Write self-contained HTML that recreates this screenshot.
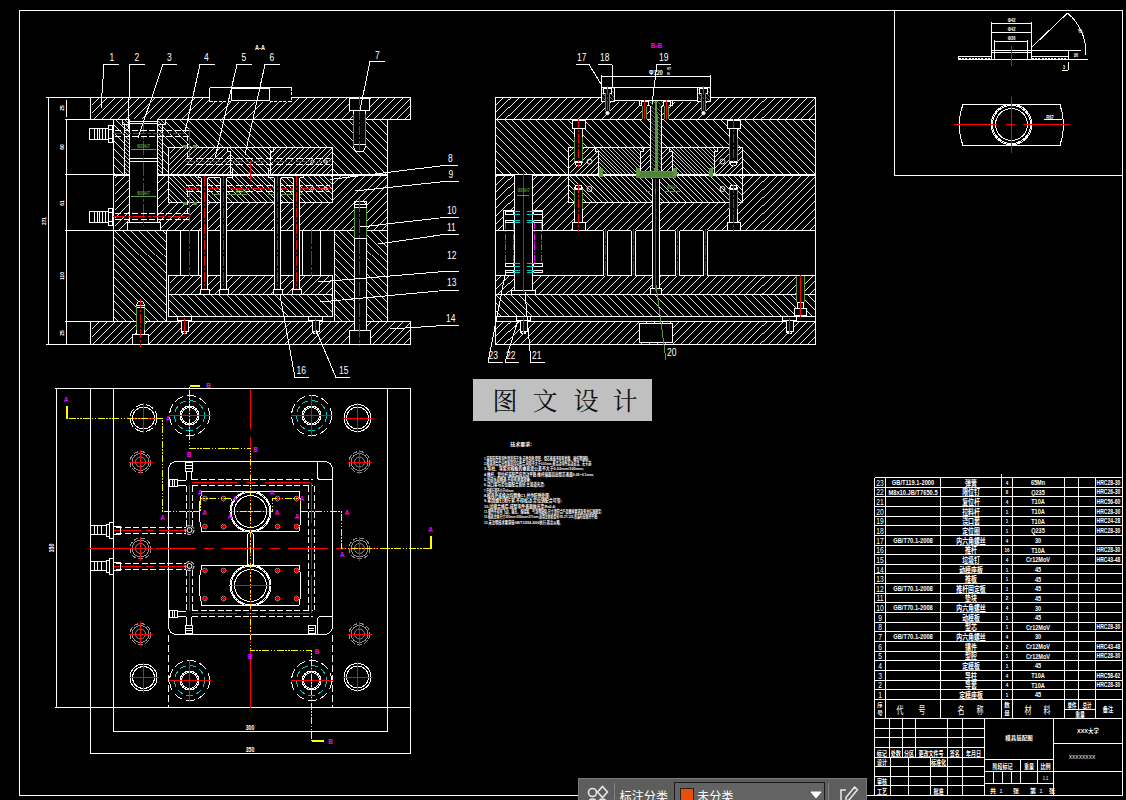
<!DOCTYPE html>
<html lang="zh"><head><meta charset="utf-8"><title>模具装配图</title>
<style>
html,body{margin:0;padding:0;background:#000;overflow:hidden}
svg{display:block}
text{white-space:pre}
</style></head><body>
<svg width="1126" height="800" viewBox="0 0 1126 800" shape-rendering="crispEdges">
<rect width="1126" height="800" fill="#000"/>

<rect x="19.5" y="10.5" width="1103" height="785" fill="none" stroke="#fff" stroke-width="1"/>
<g id="aa">
<rect x="90.5" y="97.5" width="320" height="22" fill="#000" stroke="none"/>
<path d="M90.5,105L98,97.5M90.5,113L106,97.5M92,119.5L114,97.5M100,119.5L122,97.5M108,119.5L130,97.5M116,119.5L138,97.5M124,119.5L146,97.5M132,119.5L154,97.5M140,119.5L162,97.5M148,119.5L170,97.5M156,119.5L178,97.5M164,119.5L186,97.5M172,119.5L194,97.5M180,119.5L202,97.5M188,119.5L210,97.5M196,119.5L218,97.5M204,119.5L226,97.5M212,119.5L234,97.5M220,119.5L242,97.5M228,119.5L250,97.5M236,119.5L258,97.5M244,119.5L266,97.5M252,119.5L274,97.5M260,119.5L282,97.5M268,119.5L290,97.5M276,119.5L298,97.5M284,119.5L306,97.5M292,119.5L314,97.5M300,119.5L322,97.5M308,119.5L330,97.5M316,119.5L338,97.5M324,119.5L346,97.5M332,119.5L354,97.5M340,119.5L362,97.5M348,119.5L370,97.5M356,119.5L378,97.5M364,119.5L386,97.5M372,119.5L394,97.5M380,119.5L402,97.5M388,119.5L410,97.5M396,119.5L410.5,105M404,119.5L410.5,113" stroke="#fff" stroke-width="0.9" fill="none" shape-rendering="crispEdges"/>
<rect x="90.5" y="97.5" width="320" height="22" fill="none" stroke="#fff" stroke-width="1"/>
<rect x="113.5" y="119.5" width="274" height="55" fill="#000" stroke="none"/>
<path d="M113.5,173L115,174.5M113.5,165L123,174.5M113.5,157L131,174.5M113.5,149L139,174.5M113.5,141L147,174.5M113.5,133L155,174.5M113.5,125L163,174.5M116,119.5L171,174.5M124,119.5L179,174.5M132,119.5L187,174.5M140,119.5L195,174.5M148,119.5L203,174.5M156,119.5L211,174.5M164,119.5L219,174.5M172,119.5L227,174.5M180,119.5L235,174.5M188,119.5L243,174.5M196,119.5L251,174.5M204,119.5L259,174.5M212,119.5L267,174.5M220,119.5L275,174.5M228,119.5L283,174.5M236,119.5L291,174.5M244,119.5L299,174.5M252,119.5L307,174.5M260,119.5L315,174.5M268,119.5L323,174.5M276,119.5L331,174.5M284,119.5L339,174.5M292,119.5L347,174.5M300,119.5L355,174.5M308,119.5L363,174.5M316,119.5L371,174.5M324,119.5L379,174.5M332,119.5L387,174.5M340,119.5L387.5,167M348,119.5L387.5,159M356,119.5L387.5,151M364,119.5L387.5,143M372,119.5L387.5,135M380,119.5L387.5,127" stroke="#fff" stroke-width="0.9" fill="none" shape-rendering="crispEdges"/>
<rect x="113.5" y="119.5" width="274" height="55" fill="none" stroke="#fff" stroke-width="1"/>
<rect x="113.5" y="175.5" width="274" height="55" fill="#000" stroke="none"/>
<path d="M113.5,178L116,175.5M113.5,186L124,175.5M113.5,194L132,175.5M113.5,202L140,175.5M113.5,210L148,175.5M113.5,218L156,175.5M113.5,226L164,175.5M117,230.5L172,175.5M125,230.5L180,175.5M133,230.5L188,175.5M141,230.5L196,175.5M149,230.5L204,175.5M157,230.5L212,175.5M165,230.5L220,175.5M173,230.5L228,175.5M181,230.5L236,175.5M189,230.5L244,175.5M197,230.5L252,175.5M205,230.5L260,175.5M213,230.5L268,175.5M221,230.5L276,175.5M229,230.5L284,175.5M237,230.5L292,175.5M245,230.5L300,175.5M253,230.5L308,175.5M261,230.5L316,175.5M269,230.5L324,175.5M277,230.5L332,175.5M285,230.5L340,175.5M293,230.5L348,175.5M301,230.5L356,175.5M309,230.5L364,175.5M317,230.5L372,175.5M325,230.5L380,175.5M333,230.5L387.5,176M341,230.5L387.5,184M349,230.5L387.5,192M357,230.5L387.5,200M365,230.5L387.5,208M373,230.5L387.5,216M381,230.5L387.5,224" stroke="#fff" stroke-width="0.9" fill="none" shape-rendering="crispEdges"/>
<rect x="113.5" y="175.5" width="274" height="55" fill="none" stroke="#fff" stroke-width="1"/>
<rect x="113.5" y="230.5" width="53" height="91" fill="#000" stroke="none"/>
<path d="M113.5,317L118,321.5M113.5,309L126,321.5M113.5,301L134,321.5M113.5,293L142,321.5M113.5,285L150,321.5M113.5,277L158,321.5M113.5,269L166,321.5M113.5,261L166.5,314M113.5,253L166.5,306M113.5,245L166.5,298M113.5,237L166.5,290M115,230.5L166.5,282M123,230.5L166.5,274M131,230.5L166.5,266M139,230.5L166.5,258M147,230.5L166.5,250M155,230.5L166.5,242M163,230.5L166.5,234" stroke="#fff" stroke-width="0.9" fill="none" shape-rendering="crispEdges"/>
<rect x="113.5" y="230.5" width="53" height="91" fill="none" stroke="#fff" stroke-width="1"/>
<rect x="334.5" y="230.5" width="53" height="91" fill="#000" stroke="none"/>
<path d="M334.5,314L342,321.5M334.5,306L350,321.5M334.5,298L358,321.5M334.5,290L366,321.5M334.5,282L374,321.5M334.5,274L382,321.5M334.5,266L387.5,319M334.5,258L387.5,311M334.5,250L387.5,303M334.5,242L387.5,295M334.5,234L387.5,287M339,230.5L387.5,279M347,230.5L387.5,271M355,230.5L387.5,263M363,230.5L387.5,255M371,230.5L387.5,247M379,230.5L387.5,239M387,230.5L387.5,231" stroke="#fff" stroke-width="0.9" fill="none" shape-rendering="crispEdges"/>
<rect x="334.5" y="230.5" width="53" height="91" fill="none" stroke="#fff" stroke-width="1"/>
<rect x="90.5" y="321.5" width="320" height="23" fill="#000" stroke="none"/>
<path d="M90.5,329L98,321.5M90.5,337L106,321.5M91,344.5L114,321.5M99,344.5L122,321.5M107,344.5L130,321.5M115,344.5L138,321.5M123,344.5L146,321.5M131,344.5L154,321.5M139,344.5L162,321.5M147,344.5L170,321.5M155,344.5L178,321.5M163,344.5L186,321.5M171,344.5L194,321.5M179,344.5L202,321.5M187,344.5L210,321.5M195,344.5L218,321.5M203,344.5L226,321.5M211,344.5L234,321.5M219,344.5L242,321.5M227,344.5L250,321.5M235,344.5L258,321.5M243,344.5L266,321.5M251,344.5L274,321.5M259,344.5L282,321.5M267,344.5L290,321.5M275,344.5L298,321.5M283,344.5L306,321.5M291,344.5L314,321.5M299,344.5L322,321.5M307,344.5L330,321.5M315,344.5L338,321.5M323,344.5L346,321.5M331,344.5L354,321.5M339,344.5L362,321.5M347,344.5L370,321.5M355,344.5L378,321.5M363,344.5L386,321.5M371,344.5L394,321.5M379,344.5L402,321.5M387,344.5L410,321.5M395,344.5L410.5,329M403,344.5L410.5,337" stroke="#fff" stroke-width="0.9" fill="none" shape-rendering="crispEdges"/>
<rect x="90.5" y="321.5" width="320" height="23" fill="none" stroke="#fff" stroke-width="1"/>
<rect x="168.5" y="275.5" width="164" height="19" fill="#000" stroke="none"/>
<path d="M168.5,283L176,275.5M168.5,291L184,275.5M173,294.5L192,275.5M181,294.5L200,275.5M189,294.5L208,275.5M197,294.5L216,275.5M205,294.5L224,275.5M213,294.5L232,275.5M221,294.5L240,275.5M229,294.5L248,275.5M237,294.5L256,275.5M245,294.5L264,275.5M253,294.5L272,275.5M261,294.5L280,275.5M269,294.5L288,275.5M277,294.5L296,275.5M285,294.5L304,275.5M293,294.5L312,275.5M301,294.5L320,275.5M309,294.5L328,275.5M317,294.5L332.5,279M325,294.5L332.5,287" stroke="#fff" stroke-width="0.9" fill="none" shape-rendering="crispEdges"/>
<rect x="168.5" y="275.5" width="164" height="19" fill="none" stroke="#fff" stroke-width="1"/>
<rect x="168.5" y="294.5" width="164" height="22" fill="#000" stroke="none"/>
<path d="M168.5,316L169,316.5M168.5,308L177,316.5M168.5,300L185,316.5M171,294.5L193,316.5M179,294.5L201,316.5M187,294.5L209,316.5M195,294.5L217,316.5M203,294.5L225,316.5M211,294.5L233,316.5M219,294.5L241,316.5M227,294.5L249,316.5M235,294.5L257,316.5M243,294.5L265,316.5M251,294.5L273,316.5M259,294.5L281,316.5M267,294.5L289,316.5M275,294.5L297,316.5M283,294.5L305,316.5M291,294.5L313,316.5M299,294.5L321,316.5M307,294.5L329,316.5M315,294.5L332.5,312M323,294.5L332.5,304M331,294.5L332.5,296" stroke="#fff" stroke-width="0.9" fill="none" shape-rendering="crispEdges"/>
<rect x="168.5" y="294.5" width="164" height="22" fill="none" stroke="#fff" stroke-width="1"/>
<rect x="168.5" y="147.5" width="164" height="55" fill="#000" stroke="#fff" stroke-width="1"/>
<rect x="168.5" y="147.5" width="164" height="27" fill="#000" stroke="none"/>
<path d="M168.5,153.4L174.4,147.5M168.5,159L180,147.5M168.5,164.6L185.6,147.5M168.5,170.2L191.2,147.5M169.8,174.5L196.8,147.5M175.4,174.5L202.4,147.5M181,174.5L208,147.5M186.6,174.5L213.6,147.5M192.2,174.5L219.2,147.5M197.8,174.5L224.8,147.5M203.4,174.5L230.4,147.5M209,174.5L236,147.5M214.6,174.5L241.6,147.5M220.2,174.5L247.2,147.5M225.8,174.5L252.8,147.5M231.4,174.5L258.4,147.5M237,174.5L264,147.5M242.6,174.5L269.6,147.5M248.2,174.5L275.2,147.5M253.8,174.5L280.8,147.5M259.4,174.5L286.4,147.5M265,174.5L292,147.5M270.6,174.5L297.6,147.5M276.2,174.5L303.2,147.5M281.8,174.5L308.8,147.5M287.4,174.5L314.4,147.5M293,174.5L320,147.5M298.6,174.5L325.6,147.5M304.2,174.5L331.2,147.5M309.8,174.5L332.5,151.8M315.4,174.5L332.5,157.4M321,174.5L332.5,163M326.6,174.5L332.5,168.6M332.2,174.5L332.5,174.2" stroke="#fff" stroke-width="0.9" fill="none" shape-rendering="crispEdges"/>
<rect x="168.5" y="147.5" width="164" height="27" fill="none" stroke="#fff" stroke-width="1"/>
<rect x="168.5" y="175.5" width="164" height="27" fill="#000" stroke="none"/>
<path d="M168.5,198.7L172.3,202.5M168.5,193.1L177.9,202.5M168.5,187.5L183.5,202.5M168.5,181.9L189.1,202.5M168.5,176.3L194.7,202.5M173.3,175.5L200.3,202.5M178.9,175.5L205.9,202.5M184.5,175.5L211.5,202.5M190.1,175.5L217.1,202.5M195.7,175.5L222.7,202.5M201.3,175.5L228.3,202.5M206.9,175.5L233.9,202.5M212.5,175.5L239.5,202.5M218.1,175.5L245.1,202.5M223.7,175.5L250.7,202.5M229.3,175.5L256.3,202.5M234.9,175.5L261.9,202.5M240.5,175.5L267.5,202.5M246.1,175.5L273.1,202.5M251.7,175.5L278.7,202.5M257.3,175.5L284.3,202.5M262.9,175.5L289.9,202.5M268.5,175.5L295.5,202.5M274.1,175.5L301.1,202.5M279.7,175.5L306.7,202.5M285.3,175.5L312.3,202.5M290.9,175.5L317.9,202.5M296.5,175.5L323.5,202.5M302.1,175.5L329.1,202.5M307.7,175.5L332.5,200.3M313.3,175.5L332.5,194.7M318.9,175.5L332.5,189.1M324.5,175.5L332.5,183.5M330.1,175.5L332.5,177.9" stroke="#fff" stroke-width="0.9" fill="none" shape-rendering="crispEdges"/>
<rect x="168.5" y="175.5" width="164" height="27" fill="none" stroke="#fff" stroke-width="1"/>
<rect x="230.5" y="151.5" width="40" height="23" fill="#000" stroke="#fff" stroke-width="1"/>
<clipPath id="cp1"><polygon points="227.5,147.5 273.5,147.5 273.5,151.5 270.5,151.5 270.5,174.5 230.5,174.5 230.5,151.5 227.5,151.5"/></clipPath>
<polygon points="227.5,147.5 273.5,147.5 273.5,151.5 270.5,151.5 270.5,174.5 230.5,174.5 230.5,151.5 227.5,151.5" fill="#000" stroke="none"/>
<path d="M227.5,173.7L228.3,174.5M227.5,168.1L233.9,174.5M227.5,162.5L239.5,174.5M227.5,156.9L245.1,174.5M227.5,151.3L250.7,174.5M229.3,147.5L256.3,174.5M234.9,147.5L261.9,174.5M240.5,147.5L267.5,174.5M246.1,147.5L273.1,174.5M251.7,147.5L273.5,169.3M257.3,147.5L273.5,163.7M262.9,147.5L273.5,158.1M268.5,147.5L273.5,152.5" stroke="#fff" stroke-width="0.9" fill="none" shape-rendering="crispEdges" clip-path="url(#cp1)"/>
<polygon points="227.5,147.5 273.5,147.5 273.5,151.5 270.5,151.5 270.5,174.5 230.5,174.5 230.5,151.5 227.5,151.5" fill="none" stroke="#fff" stroke-width="1"/>
<line x1="232.5" y1="168" x2="232.5" y2="175" stroke="#fff" stroke-width="1"/>
<line x1="268.5" y1="168" x2="268.5" y2="175" stroke="#fff" stroke-width="1"/>
<rect x="198.5" y="175.5" width="34" height="2" fill="#000" stroke="#fff" stroke-width="1"/>
<rect x="268.5" y="175.5" width="35" height="2" fill="#000" stroke="#fff" stroke-width="1"/>
<rect x="209.5" y="87.5" width="82" height="14" fill="#000" stroke="#000" stroke-width="1"/>
<line x1="209.5" y1="87.5" x2="291.5" y2="87.5" stroke="#fff" stroke-width="1"/>
<line x1="209.5" y1="87.5" x2="209.5" y2="101.5" stroke="#fff" stroke-width="1"/>
<line x1="291.5" y1="87.5" x2="291.5" y2="101.5" stroke="#fff" stroke-width="1" stroke-dasharray="3 1.5"/>
<line x1="209.5" y1="101.5" x2="231.5" y2="101.5" stroke="#fff" stroke-width="1" stroke-dasharray="3 1.5"/>
<line x1="269.5" y1="101.5" x2="291.5" y2="101.5" stroke="#fff" stroke-width="1" stroke-dasharray="3 1.5"/>
<line x1="231.5" y1="87.5" x2="231.5" y2="100.5" stroke="#fff" stroke-width="1"/>
<line x1="269.5" y1="87.5" x2="269.5" y2="100.5" stroke="#fff" stroke-width="1"/>
<line x1="231.5" y1="100.5" x2="269.5" y2="100.5" stroke="#fff" stroke-width="1"/>
<line x1="231.5" y1="88.5" x2="269.5" y2="88.5" stroke="#fff" stroke-width="1"/>
<rect x="122.5" y="119.5" width="43" height="5" fill="#000" stroke="#000" stroke-width="1"/>
<rect x="122.5" y="119.5" width="7" height="5" fill="#000" stroke="none"/>
<path d="M122.5,121.2L125.8,124.5M124.8,119.5L129.5,124.2M128.8,119.5L129.5,120.2" stroke="#fff" stroke-width="0.8" fill="none" shape-rendering="crispEdges"/>
<rect x="122.5" y="119.5" width="7" height="5" fill="none" stroke="#fff" stroke-width="1"/>
<rect x="157.5" y="119.5" width="8" height="5" fill="#000" stroke="none"/>
<path d="M157.5,124.2L157.8,124.5M157.5,120.2L161.8,124.5M160.8,119.5L165.5,124.2M164.8,119.5L165.5,120.2" stroke="#fff" stroke-width="0.8" fill="none" shape-rendering="crispEdges"/>
<rect x="157.5" y="119.5" width="8" height="5" fill="none" stroke="#fff" stroke-width="1"/>
<rect x="124.5" y="124.5" width="38" height="50" fill="#000" stroke="#000" stroke-width="1"/>
<rect x="124.5" y="124.5" width="5" height="50" fill="#000" stroke="none"/>
<path d="M124.5,171.2L127.8,174.5M124.5,167.2L129.5,172.2M124.5,163.2L129.5,168.2M124.5,159.2L129.5,164.2M124.5,155.2L129.5,160.2M124.5,151.2L129.5,156.2M124.5,147.2L129.5,152.2M124.5,143.2L129.5,148.2M124.5,139.2L129.5,144.2M124.5,135.2L129.5,140.2M124.5,131.2L129.5,136.2M124.5,127.2L129.5,132.2M125.8,124.5L129.5,128.2" stroke="#fff" stroke-width="0.8" fill="none" shape-rendering="crispEdges"/>
<rect x="124.5" y="124.5" width="5" height="50" fill="none" stroke="#fff" stroke-width="1"/>
<rect x="157.5" y="124.5" width="5" height="50" fill="#000" stroke="none"/>
<path d="M157.5,172.2L159.8,174.5M157.5,168.2L162.5,173.2M157.5,164.2L162.5,169.2M157.5,160.2L162.5,165.2M157.5,156.2L162.5,161.2M157.5,152.2L162.5,157.2M157.5,148.2L162.5,153.2M157.5,144.2L162.5,149.2M157.5,140.2L162.5,145.2M157.5,136.2L162.5,141.2M157.5,132.2L162.5,137.2M157.5,128.2L162.5,133.2M157.8,124.5L162.5,129.2M161.8,124.5L162.5,125.2" stroke="#fff" stroke-width="0.8" fill="none" shape-rendering="crispEdges"/>
<rect x="157.5" y="124.5" width="5" height="50" fill="none" stroke="#fff" stroke-width="1"/>
<rect x="129.5" y="121.5" width="28" height="102" fill="#000" stroke="#fff" stroke-width="1"/>
<line x1="129.5" y1="123.5" x2="157.5" y2="123.5" stroke="#fff" stroke-width="1"/>
<line x1="129.5" y1="158.5" x2="157.5" y2="158.5" stroke="#fff" stroke-width="1"/>
<line x1="129.5" y1="161.5" x2="157.5" y2="161.5" stroke="#fff" stroke-width="1"/>
<rect x="127.5" y="222.5" width="33" height="8" fill="#000" stroke="#fff" stroke-width="1"/>
<line x1="143.5" y1="120" x2="143.5" y2="226" stroke="#ff0000" stroke-width="1" stroke-dasharray="14 2 3 2"/>
<line x1="131" y1="149.5" x2="156" y2="149.5" stroke="#5a9a3c" stroke-width="1"/>
<text transform="translate(143.5 148) scale(0.8 1)" font-size="5" fill="#5a9a3c" text-anchor="middle" font-family="&quot;Liberation Sans&quot;, &quot;Noto Sans CJK SC&quot;, sans-serif" font-weight="bold">Φ20H7</text>
<line x1="131" y1="196.5" x2="156" y2="196.5" stroke="#5a9a3c" stroke-width="1"/>
<text transform="translate(143.5 195) scale(0.8 1)" font-size="5" fill="#5a9a3c" text-anchor="middle" font-family="&quot;Liberation Sans&quot;, &quot;Noto Sans CJK SC&quot;, sans-serif" font-weight="bold">Φ20H7</text>
<line x1="115" y1="130.5" x2="190" y2="130.5" stroke="#fff" stroke-width="1" stroke-dasharray="6 2.5"/>
<line x1="115" y1="136.5" x2="190" y2="136.5" stroke="#fff" stroke-width="1" stroke-dasharray="6 2.5"/>
<line x1="113" y1="133.5" x2="190" y2="133.5" stroke="#ff0000" stroke-width="1" stroke-dasharray="12 2.5 3 2.5"/>
<line x1="189.5" y1="128" x2="189.5" y2="162" stroke="#ff0000" stroke-width="1"/>
<line x1="187.5" y1="136" x2="187.5" y2="158" stroke="#fff" stroke-width="1" stroke-dasharray="5 3"/>
<line x1="115" y1="213.5" x2="190" y2="213.5" stroke="#fff" stroke-width="1" stroke-dasharray="6 2.5"/>
<line x1="115" y1="219.5" x2="190" y2="219.5" stroke="#fff" stroke-width="1" stroke-dasharray="6 2.5"/>
<line x1="113" y1="216.5" x2="190" y2="216.5" stroke="#ff0000" stroke-width="1" stroke-dasharray="12 2.5 3 2.5"/>
<line x1="189.5" y1="188" x2="189.5" y2="222" stroke="#ff0000" stroke-width="1"/>
<line x1="187.5" y1="192" x2="187.5" y2="214" stroke="#fff" stroke-width="1" stroke-dasharray="5 3"/>
<line x1="186" y1="158.5" x2="330" y2="158.5" stroke="#fff" stroke-width="1" stroke-dasharray="7 3"/>
<line x1="186" y1="164.5" x2="330" y2="164.5" stroke="#fff" stroke-width="1" stroke-dasharray="7 3"/>
<line x1="185" y1="161.5" x2="332" y2="161.5" stroke="#ff0000" stroke-width="1" stroke-dasharray="14 2.5 3 2.5"/>
<circle cx="312.5" cy="161.5" r="1.6" fill="none" stroke="#fff" stroke-width="1" shape-rendering="geometricPrecision"/>
<circle cx="325.5" cy="161.5" r="1.6" fill="none" stroke="#fff" stroke-width="1" shape-rendering="geometricPrecision"/>
<line x1="186" y1="185.5" x2="330" y2="185.5" stroke="#fff" stroke-width="1" stroke-dasharray="7 3"/>
<line x1="186" y1="191.5" x2="330" y2="191.5" stroke="#fff" stroke-width="1" stroke-dasharray="7 3"/>
<line x1="185" y1="188.5" x2="332" y2="188.5" stroke="#ff0000" stroke-width="1" stroke-dasharray="14 2.5 3 2.5"/>
<circle cx="312.5" cy="188.5" r="1.6" fill="none" stroke="#fff" stroke-width="1" shape-rendering="geometricPrecision"/>
<circle cx="325.5" cy="188.5" r="1.6" fill="none" stroke="#fff" stroke-width="1" shape-rendering="geometricPrecision"/>
<line x1="250.5" y1="161" x2="250.5" y2="181" stroke="#ff0000" stroke-width="1"/>
<rect x="183.5" y="145.5" width="3" height="2" fill="#5a9a3c" stroke="#5a9a3c" stroke-width="1"/>
<rect x="193.5" y="145.5" width="3" height="2" fill="#5a9a3c" stroke="#5a9a3c" stroke-width="1"/>
<rect x="183.5" y="202.5" width="3" height="2" fill="#5a9a3c" stroke="#5a9a3c" stroke-width="1"/>
<rect x="193.5" y="202.5" width="3" height="2" fill="#5a9a3c" stroke="#5a9a3c" stroke-width="1"/>
<line x1="189.5" y1="149" x2="189.5" y2="156" stroke="#5a9a3c" stroke-width="1" stroke-dasharray="3 3"/>
<line x1="189.5" y1="194" x2="189.5" y2="201" stroke="#5a9a3c" stroke-width="1" stroke-dasharray="3 3"/>
<text transform="translate(241 193) scale(0.8 1)" font-size="5" fill="#5a9a3c" text-anchor="middle" font-family="&quot;Liberation Sans&quot;, &quot;Noto Sans CJK SC&quot;, sans-serif" font-weight="bold">Φ5H7</text>
<text transform="translate(296 193) scale(0.8 1)" font-size="5" fill="#5a9a3c" text-anchor="middle" font-family="&quot;Liberation Sans&quot;, &quot;Noto Sans CJK SC&quot;, sans-serif" font-weight="bold">Φ5H7</text>
<line x1="212" y1="194.5" x2="247" y2="194.5" stroke="#5a9a3c" stroke-width="1"/>
<line x1="268" y1="194.5" x2="302" y2="194.5" stroke="#5a9a3c" stroke-width="1"/>
<rect x="89.5" y="128.5" width="19" height="11" fill="#000" stroke="#fff" stroke-width="1"/>
<line x1="94.5" y1="128.5" x2="94.5" y2="139.5" stroke="#fff" stroke-width="1"/>
<line x1="97.5" y1="128.5" x2="97.5" y2="139.5" stroke="#fff" stroke-width="1"/>
<line x1="99.5" y1="128.5" x2="99.5" y2="139.5" stroke="#fff" stroke-width="1"/>
<line x1="102.5" y1="128.5" x2="102.5" y2="139.5" stroke="#fff" stroke-width="1"/>
<line x1="105.5" y1="128.5" x2="105.5" y2="139.5" stroke="#fff" stroke-width="1"/>
<rect x="108.5" y="125.5" width="4" height="17" fill="#000" stroke="#fff" stroke-width="1"/>
<line x1="108.5" y1="129.5" x2="112.5" y2="129.5" stroke="#fff" stroke-width="1"/>
<line x1="108.5" y1="138.5" x2="112.5" y2="138.5" stroke="#fff" stroke-width="1"/>
<rect x="89.5" y="211.5" width="19" height="11" fill="#000" stroke="#fff" stroke-width="1"/>
<line x1="94.5" y1="211.5" x2="94.5" y2="222.5" stroke="#fff" stroke-width="1"/>
<line x1="97.5" y1="211.5" x2="97.5" y2="222.5" stroke="#fff" stroke-width="1"/>
<line x1="99.5" y1="211.5" x2="99.5" y2="222.5" stroke="#fff" stroke-width="1"/>
<line x1="102.5" y1="211.5" x2="102.5" y2="222.5" stroke="#fff" stroke-width="1"/>
<line x1="105.5" y1="211.5" x2="105.5" y2="222.5" stroke="#fff" stroke-width="1"/>
<rect x="108.5" y="208.5" width="4" height="17" fill="#000" stroke="#fff" stroke-width="1"/>
<line x1="108.5" y1="212.5" x2="112.5" y2="212.5" stroke="#fff" stroke-width="1"/>
<line x1="108.5" y1="221.5" x2="112.5" y2="221.5" stroke="#fff" stroke-width="1"/>
<rect x="180.5" y="230.5" width="18" height="45" fill="#000" stroke="#fff" stroke-width="1"/>
<line x1="189.5" y1="230" x2="189.5" y2="276" stroke="#ff0000" stroke-width="1" stroke-dasharray="14 2 3 2"/>
<rect x="302.5" y="230.5" width="18" height="45" fill="#000" stroke="#fff" stroke-width="1"/>
<line x1="311.5" y1="230" x2="311.5" y2="276" stroke="#ff0000" stroke-width="1" stroke-dasharray="14 2 3 2"/>
<rect x="201.5" y="177.5" width="6" height="117" fill="#000" stroke="#000" stroke-width="1"/>
<line x1="201.5" y1="177.5" x2="201.5" y2="294.5" stroke="#fff" stroke-width="1"/>
<line x1="207.5" y1="177.5" x2="207.5" y2="294.5" stroke="#fff" stroke-width="1"/>
<line x1="204.5" y1="175.5" x2="204.5" y2="295.5" stroke="#ff0000" stroke-width="1" stroke-dasharray="10 2 2 2"/>
<rect x="200.5" y="289.5" width="9" height="5" fill="#000" stroke="#fff" stroke-width="1"/>
<rect x="220.5" y="177.5" width="6" height="117" fill="#000" stroke="#000" stroke-width="1"/>
<line x1="220.5" y1="177.5" x2="220.5" y2="294.5" stroke="#fff" stroke-width="1"/>
<line x1="226.5" y1="177.5" x2="226.5" y2="294.5" stroke="#fff" stroke-width="1"/>
<line x1="223.5" y1="175.5" x2="223.5" y2="295.5" stroke="#ff0000" stroke-width="1" stroke-dasharray="10 2 2 2"/>
<rect x="219.5" y="289.5" width="9" height="5" fill="#000" stroke="#fff" stroke-width="1"/>
<rect x="274.5" y="177.5" width="6" height="117" fill="#000" stroke="#000" stroke-width="1"/>
<line x1="274.5" y1="177.5" x2="274.5" y2="294.5" stroke="#fff" stroke-width="1"/>
<line x1="280.5" y1="177.5" x2="280.5" y2="294.5" stroke="#fff" stroke-width="1"/>
<line x1="277.5" y1="175.5" x2="277.5" y2="295.5" stroke="#ff0000" stroke-width="1" stroke-dasharray="10 2 2 2"/>
<rect x="273.5" y="289.5" width="9" height="5" fill="#000" stroke="#fff" stroke-width="1"/>
<rect x="293.5" y="177.5" width="6" height="117" fill="#000" stroke="#000" stroke-width="1"/>
<line x1="293.5" y1="177.5" x2="293.5" y2="294.5" stroke="#fff" stroke-width="1"/>
<line x1="299.5" y1="177.5" x2="299.5" y2="294.5" stroke="#fff" stroke-width="1"/>
<line x1="296.5" y1="175.5" x2="296.5" y2="295.5" stroke="#ff0000" stroke-width="1" stroke-dasharray="10 2 2 2"/>
<rect x="292.5" y="289.5" width="9" height="5" fill="#000" stroke="#fff" stroke-width="1"/>
<rect x="177.5" y="316.5" width="14" height="4" fill="#000" stroke="#fff" stroke-width="1"/>
<rect x="181.5" y="320.5" width="7" height="11" fill="#000" stroke="#fff" stroke-width="1"/>
<path d="M181,331 L182.5,333 L186.5,333 L188,331" fill="none" stroke="#fff" stroke-width="1"/>
<line x1="184.5" y1="318" x2="184.5" y2="334" stroke="#ff0000" stroke-width="1"/>
<rect x="308.5" y="316.5" width="14" height="4" fill="#000" stroke="#fff" stroke-width="1"/>
<rect x="312.5" y="320.5" width="7" height="11" fill="#000" stroke="#fff" stroke-width="1"/>
<path d="M312,331 L313.5,333 L317.5,333 L319,331" fill="none" stroke="#fff" stroke-width="1"/>
<line x1="315.5" y1="318" x2="315.5" y2="334" stroke="#ff0000" stroke-width="1"/>
<rect x="349.5" y="98.5" width="20" height="12" fill="#000" stroke="#fff" stroke-width="1"/>
<rect x="353.5" y="110.5" width="12" height="37" fill="#000" stroke="#fff" stroke-width="1"/>
<line x1="353.5" y1="114" x2="353.5" y2="146" stroke="#5a9a3c" stroke-width="1"/>
<line x1="365.5" y1="114" x2="365.5" y2="146" stroke="#5a9a3c" stroke-width="1"/>
<polyline points="353.5,147 355.5,151 363.5,151 365.5,147" fill="#000" stroke="#fff" stroke-width="1"/>
<line x1="353.5" y1="144.5" x2="365.5" y2="144.5" stroke="#fff" stroke-width="1"/>
<line x1="359.5" y1="96" x2="359.5" y2="153" stroke="#ff0000" stroke-width="1" stroke-dasharray="9 2 2 2"/>
<rect x="349.5" y="330.5" width="21" height="14" fill="#000" stroke="#fff" stroke-width="1"/>
<rect x="354.5" y="201.5" width="12" height="129" fill="#000" stroke="#fff" stroke-width="1"/>
<path d="M354,205 L356,201 L364,201 L366,205" fill="#000" stroke="#fff" stroke-width="1"/>
<line x1="354" y1="204.5" x2="366" y2="204.5" stroke="#fff" stroke-width="1"/>
<line x1="354" y1="207.5" x2="366" y2="207.5" stroke="#fff" stroke-width="1"/>
<line x1="354.5" y1="208" x2="354.5" y2="238" stroke="#5a9a3c" stroke-width="1"/>
<line x1="366.5" y1="208" x2="366.5" y2="238" stroke="#5a9a3c" stroke-width="1"/>
<line x1="354" y1="238.5" x2="366" y2="238.5" stroke="#fff" stroke-width="1"/>
<line x1="359.5" y1="198" x2="359.5" y2="346" stroke="#ff0000" stroke-width="1" stroke-dasharray="14 2 3 2"/>
<rect x="132.5" y="334.5" width="16" height="10" fill="#000" stroke="#fff" stroke-width="1"/>
<rect x="136.5" y="305.5" width="8" height="29" fill="#000" stroke="#fff" stroke-width="1"/>
<line x1="136.5" y1="306" x2="136.5" y2="330" stroke="#5a9a3c" stroke-width="1"/>
<line x1="144.5" y1="306" x2="144.5" y2="330" stroke="#5a9a3c" stroke-width="1"/>
<polyline points="136.5,305 138.5,301 142.5,301 144.5,305" fill="#000" stroke="#fff" stroke-width="1"/>
<line x1="136.5" y1="307.5" x2="144.5" y2="307.5" stroke="#fff" stroke-width="1"/>
<line x1="140.5" y1="299" x2="140.5" y2="346.5" stroke="#ff0000" stroke-width="1" stroke-dasharray="9 2 2 2"/>
<line x1="46" y1="97.5" x2="90.5" y2="97.5" stroke="#fff" stroke-width="1"/>
<line x1="46" y1="344.5" x2="90.5" y2="344.5" stroke="#fff" stroke-width="1"/>
<line x1="48.5" y1="97.5" x2="48.5" y2="344.5" stroke="#fff" stroke-width="1"/>
<line x1="66.5" y1="100" x2="66.5" y2="117" stroke="#fff" stroke-width="1"/>
<line x1="66.5" y1="119.5" x2="66.5" y2="344.5" stroke="#fff" stroke-width="1"/>
<line x1="65" y1="119.5" x2="113.5" y2="119.5" stroke="#fff" stroke-width="1"/>
<line x1="65" y1="174.5" x2="113.5" y2="174.5" stroke="#fff" stroke-width="1"/>
<line x1="65" y1="230.5" x2="113.5" y2="230.5" stroke="#fff" stroke-width="1"/>
<line x1="65" y1="321.5" x2="90.5" y2="321.5" stroke="#fff" stroke-width="1"/>
<text transform="translate(64 108) rotate(-90) scale(0.8 1)" font-size="6" fill="#fff" text-anchor="middle" font-family="&quot;Liberation Sans&quot;, &quot;Noto Sans CJK SC&quot;, sans-serif" font-weight="bold">25</text>
<text transform="translate(64 147) rotate(-90) scale(0.8 1)" font-size="6" fill="#fff" text-anchor="middle" font-family="&quot;Liberation Sans&quot;, &quot;Noto Sans CJK SC&quot;, sans-serif" font-weight="bold">60</text>
<text transform="translate(64 203) rotate(-90) scale(0.8 1)" font-size="6" fill="#fff" text-anchor="middle" font-family="&quot;Liberation Sans&quot;, &quot;Noto Sans CJK SC&quot;, sans-serif" font-weight="bold">61</text>
<text transform="translate(64 276) rotate(-90) scale(0.8 1)" font-size="6" fill="#fff" text-anchor="middle" font-family="&quot;Liberation Sans&quot;, &quot;Noto Sans CJK SC&quot;, sans-serif" font-weight="bold">110</text>
<text transform="translate(64 333) rotate(-90) scale(0.8 1)" font-size="6" fill="#fff" text-anchor="middle" font-family="&quot;Liberation Sans&quot;, &quot;Noto Sans CJK SC&quot;, sans-serif" font-weight="bold">25</text>
<text transform="translate(46 221) rotate(-90) scale(0.8 1)" font-size="6" fill="#fff" text-anchor="middle" font-family="&quot;Liberation Sans&quot;, &quot;Noto Sans CJK SC&quot;, sans-serif" font-weight="bold">271</text>
<text transform="translate(109.5 61) scale(0.76 1)" font-size="11.2" fill="#fff" text-anchor="start" font-family="&quot;Liberation Sans&quot;, &quot;Noto Sans CJK SC&quot;, sans-serif">1</text>
<line x1="104" y1="64.5" x2="119" y2="64.5" stroke="#fff" stroke-width="1"/>
<line x1="104" y1="64.5" x2="101" y2="108" stroke="#fff" stroke-width="1"/>
<text transform="translate(134.5 61) scale(0.76 1)" font-size="11.2" fill="#fff" text-anchor="start" font-family="&quot;Liberation Sans&quot;, &quot;Noto Sans CJK SC&quot;, sans-serif">2</text>
<line x1="130" y1="64.5" x2="145" y2="64.5" stroke="#fff" stroke-width="1"/>
<line x1="130" y1="64.5" x2="128" y2="130" stroke="#fff" stroke-width="1"/>
<text transform="translate(167 61) scale(0.76 1)" font-size="11.2" fill="#fff" text-anchor="start" font-family="&quot;Liberation Sans&quot;, &quot;Noto Sans CJK SC&quot;, sans-serif">3</text>
<line x1="163" y1="64.5" x2="177" y2="64.5" stroke="#fff" stroke-width="1"/>
<line x1="163" y1="64.5" x2="138" y2="138" stroke="#fff" stroke-width="1"/>
<text transform="translate(204 61) scale(0.76 1)" font-size="11.2" fill="#fff" text-anchor="start" font-family="&quot;Liberation Sans&quot;, &quot;Noto Sans CJK SC&quot;, sans-serif">4</text>
<line x1="200" y1="64.5" x2="215" y2="64.5" stroke="#fff" stroke-width="1"/>
<line x1="200" y1="64.5" x2="185" y2="132" stroke="#fff" stroke-width="1"/>
<text transform="translate(241.5 61) scale(0.76 1)" font-size="11.2" fill="#fff" text-anchor="start" font-family="&quot;Liberation Sans&quot;, &quot;Noto Sans CJK SC&quot;, sans-serif">5</text>
<line x1="237" y1="64.5" x2="252" y2="64.5" stroke="#fff" stroke-width="1"/>
<line x1="237" y1="64.5" x2="215" y2="158" stroke="#fff" stroke-width="1"/>
<text transform="translate(269.5 61) scale(0.76 1)" font-size="11.2" fill="#fff" text-anchor="start" font-family="&quot;Liberation Sans&quot;, &quot;Noto Sans CJK SC&quot;, sans-serif">6</text>
<line x1="265" y1="64.5" x2="280" y2="64.5" stroke="#fff" stroke-width="1"/>
<line x1="265" y1="64.5" x2="245" y2="155" stroke="#fff" stroke-width="1"/>
<text transform="translate(375 58.5) scale(0.76 1)" font-size="11.2" fill="#fff" text-anchor="start" font-family="&quot;Liberation Sans&quot;, &quot;Noto Sans CJK SC&quot;, sans-serif">7</text>
<line x1="370" y1="61.5" x2="385" y2="61.5" stroke="#fff" stroke-width="1"/>
<line x1="370" y1="61.5" x2="360" y2="110" stroke="#fff" stroke-width="1"/>
<text transform="translate(448 162) scale(0.76 1)" font-size="11.2" fill="#fff" text-anchor="start" font-family="&quot;Liberation Sans&quot;, &quot;Noto Sans CJK SC&quot;, sans-serif">8</text>
<line x1="444" y1="165.5" x2="458" y2="165.5" stroke="#fff" stroke-width="1"/>
<line x1="444" y1="165.5" x2="330" y2="179.5" stroke="#fff" stroke-width="1"/>
<text transform="translate(448.5 178) scale(0.76 1)" font-size="11.2" fill="#fff" text-anchor="start" font-family="&quot;Liberation Sans&quot;, &quot;Noto Sans CJK SC&quot;, sans-serif">9</text>
<line x1="445" y1="181.5" x2="459" y2="181.5" stroke="#fff" stroke-width="1"/>
<line x1="445" y1="181.5" x2="355" y2="191" stroke="#fff" stroke-width="1"/>
<text transform="translate(447 214) scale(0.76 1)" font-size="11.2" fill="#fff" text-anchor="start" font-family="&quot;Liberation Sans&quot;, &quot;Noto Sans CJK SC&quot;, sans-serif">10</text>
<line x1="444" y1="217.5" x2="459" y2="217.5" stroke="#fff" stroke-width="1"/>
<line x1="444" y1="217.5" x2="360" y2="227" stroke="#fff" stroke-width="1"/>
<text transform="translate(447 231) scale(0.76 1)" font-size="11.2" fill="#fff" text-anchor="start" font-family="&quot;Liberation Sans&quot;, &quot;Noto Sans CJK SC&quot;, sans-serif">11</text>
<line x1="444" y1="234.5" x2="459" y2="234.5" stroke="#fff" stroke-width="1"/>
<line x1="444" y1="234.5" x2="378" y2="244" stroke="#fff" stroke-width="1"/>
<text transform="translate(447 259) scale(0.76 1)" font-size="11.2" fill="#fff" text-anchor="start" font-family="&quot;Liberation Sans&quot;, &quot;Noto Sans CJK SC&quot;, sans-serif">12</text>
<line x1="444" y1="271.5" x2="459" y2="271.5" stroke="#fff" stroke-width="1"/>
<line x1="444" y1="271.5" x2="318" y2="282" stroke="#fff" stroke-width="1"/>
<text transform="translate(447 286) scale(0.76 1)" font-size="11.2" fill="#fff" text-anchor="start" font-family="&quot;Liberation Sans&quot;, &quot;Noto Sans CJK SC&quot;, sans-serif">13</text>
<line x1="444" y1="290.5" x2="459" y2="290.5" stroke="#fff" stroke-width="1"/>
<line x1="444" y1="290.5" x2="320" y2="302" stroke="#fff" stroke-width="1"/>
<text transform="translate(446 322) scale(0.76 1)" font-size="11.2" fill="#fff" text-anchor="start" font-family="&quot;Liberation Sans&quot;, &quot;Noto Sans CJK SC&quot;, sans-serif">14</text>
<line x1="444" y1="325.5" x2="459" y2="325.5" stroke="#fff" stroke-width="1"/>
<line x1="444" y1="325.5" x2="390" y2="329" stroke="#fff" stroke-width="1"/>
<text transform="translate(339 374) scale(0.76 1)" font-size="11.2" fill="#fff" text-anchor="start" font-family="&quot;Liberation Sans&quot;, &quot;Noto Sans CJK SC&quot;, sans-serif">15</text>
<line x1="336" y1="377.5" x2="350" y2="377.5" stroke="#fff" stroke-width="1"/>
<line x1="336" y1="377.5" x2="316" y2="330" stroke="#fff" stroke-width="1"/>
<text transform="translate(296.5 374) scale(0.76 1)" font-size="11.2" fill="#fff" text-anchor="start" font-family="&quot;Liberation Sans&quot;, &quot;Noto Sans CJK SC&quot;, sans-serif">16</text>
<line x1="295" y1="377.5" x2="309" y2="377.5" stroke="#fff" stroke-width="1"/>
<line x1="295" y1="377.5" x2="280" y2="295" stroke="#fff" stroke-width="1"/>
<text transform="translate(260 49.5) scale(0.85 1)" font-size="6.5" fill="#fff" text-anchor="middle" font-family="&quot;Liberation Sans&quot;, &quot;Noto Sans CJK SC&quot;, sans-serif" font-weight="bold">A-A</text>
</g>
<g id="bb">
<rect x="495.5" y="97.5" width="320" height="22" fill="#000" stroke="none"/>
<path d="M495.5,104.8L502.8,97.5M495.5,112.8L510.8,97.5M496.8,119.5L518.8,97.5M504.8,119.5L526.8,97.5M512.8,119.5L534.8,97.5M520.8,119.5L542.8,97.5M528.8,119.5L550.8,97.5M536.8,119.5L558.8,97.5M544.8,119.5L566.8,97.5M552.8,119.5L574.8,97.5M560.8,119.5L582.8,97.5M568.8,119.5L590.8,97.5M576.8,119.5L598.8,97.5M584.8,119.5L606.8,97.5M592.8,119.5L614.8,97.5M600.8,119.5L622.8,97.5M608.8,119.5L630.8,97.5M616.8,119.5L638.8,97.5M624.8,119.5L646.8,97.5M632.8,119.5L654.8,97.5M640.8,119.5L662.8,97.5M648.8,119.5L670.8,97.5M656.8,119.5L678.8,97.5M664.8,119.5L686.8,97.5M672.8,119.5L694.8,97.5M680.8,119.5L702.8,97.5M688.8,119.5L710.8,97.5M696.8,119.5L718.8,97.5M704.8,119.5L726.8,97.5M712.8,119.5L734.8,97.5M720.8,119.5L742.8,97.5M728.8,119.5L750.8,97.5M736.8,119.5L758.8,97.5M744.8,119.5L766.8,97.5M752.8,119.5L774.8,97.5M760.8,119.5L782.8,97.5M768.8,119.5L790.8,97.5M776.8,119.5L798.8,97.5M784.8,119.5L806.8,97.5M792.8,119.5L814.8,97.5M800.8,119.5L815.5,104.8M808.8,119.5L815.5,112.8" stroke="#fff" stroke-width="0.9" fill="none" shape-rendering="crispEdges"/>
<rect x="495.5" y="97.5" width="320" height="22" fill="none" stroke="#fff" stroke-width="1"/>
<rect x="495.5" y="119.5" width="320" height="55" fill="#000" stroke="none"/>
<path d="M495.5,174.2L495.8,174.5M495.5,166.2L503.8,174.5M495.5,158.2L511.8,174.5M495.5,150.2L519.8,174.5M495.5,142.2L527.8,174.5M495.5,134.2L535.8,174.5M495.5,126.2L543.8,174.5M496.8,119.5L551.8,174.5M504.8,119.5L559.8,174.5M512.8,119.5L567.8,174.5M520.8,119.5L575.8,174.5M528.8,119.5L583.8,174.5M536.8,119.5L591.8,174.5M544.8,119.5L599.8,174.5M552.8,119.5L607.8,174.5M560.8,119.5L615.8,174.5M568.8,119.5L623.8,174.5M576.8,119.5L631.8,174.5M584.8,119.5L639.8,174.5M592.8,119.5L647.8,174.5M600.8,119.5L655.8,174.5M608.8,119.5L663.8,174.5M616.8,119.5L671.8,174.5M624.8,119.5L679.8,174.5M632.8,119.5L687.8,174.5M640.8,119.5L695.8,174.5M648.8,119.5L703.8,174.5M656.8,119.5L711.8,174.5M664.8,119.5L719.8,174.5M672.8,119.5L727.8,174.5M680.8,119.5L735.8,174.5M688.8,119.5L743.8,174.5M696.8,119.5L751.8,174.5M704.8,119.5L759.8,174.5M712.8,119.5L767.8,174.5M720.8,119.5L775.8,174.5M728.8,119.5L783.8,174.5M736.8,119.5L791.8,174.5M744.8,119.5L799.8,174.5M752.8,119.5L807.8,174.5M760.8,119.5L815.5,174.2M768.8,119.5L815.5,166.2M776.8,119.5L815.5,158.2M784.8,119.5L815.5,150.2M792.8,119.5L815.5,142.2M800.8,119.5L815.5,134.2M808.8,119.5L815.5,126.2" stroke="#fff" stroke-width="0.9" fill="none" shape-rendering="crispEdges"/>
<rect x="495.5" y="119.5" width="320" height="55" fill="none" stroke="#fff" stroke-width="1"/>
<rect x="495.5" y="175.5" width="320" height="55" fill="#000" stroke="none"/>
<path d="M495.5,176.8L496.8,175.5M495.5,184.8L504.8,175.5M495.5,192.8L512.8,175.5M495.5,200.8L520.8,175.5M495.5,208.8L528.8,175.5M495.5,216.8L536.8,175.5M495.5,224.8L544.8,175.5M497.8,230.5L552.8,175.5M505.8,230.5L560.8,175.5M513.8,230.5L568.8,175.5M521.8,230.5L576.8,175.5M529.8,230.5L584.8,175.5M537.8,230.5L592.8,175.5M545.8,230.5L600.8,175.5M553.8,230.5L608.8,175.5M561.8,230.5L616.8,175.5M569.8,230.5L624.8,175.5M577.8,230.5L632.8,175.5M585.8,230.5L640.8,175.5M593.8,230.5L648.8,175.5M601.8,230.5L656.8,175.5M609.8,230.5L664.8,175.5M617.8,230.5L672.8,175.5M625.8,230.5L680.8,175.5M633.8,230.5L688.8,175.5M641.8,230.5L696.8,175.5M649.8,230.5L704.8,175.5M657.8,230.5L712.8,175.5M665.8,230.5L720.8,175.5M673.8,230.5L728.8,175.5M681.8,230.5L736.8,175.5M689.8,230.5L744.8,175.5M697.8,230.5L752.8,175.5M705.8,230.5L760.8,175.5M713.8,230.5L768.8,175.5M721.8,230.5L776.8,175.5M729.8,230.5L784.8,175.5M737.8,230.5L792.8,175.5M745.8,230.5L800.8,175.5M753.8,230.5L808.8,175.5M761.8,230.5L815.5,176.8M769.8,230.5L815.5,184.8M777.8,230.5L815.5,192.8M785.8,230.5L815.5,200.8M793.8,230.5L815.5,208.8M801.8,230.5L815.5,216.8M809.8,230.5L815.5,224.8" stroke="#fff" stroke-width="0.9" fill="none" shape-rendering="crispEdges"/>
<rect x="495.5" y="175.5" width="320" height="55" fill="none" stroke="#fff" stroke-width="1"/>
<rect x="495.5" y="275.5" width="320" height="19" fill="#000" stroke="none"/>
<path d="M495.5,280.8L500.8,275.5M495.5,288.8L508.8,275.5M497.8,294.5L516.8,275.5M505.8,294.5L524.8,275.5M513.8,294.5L532.8,275.5M521.8,294.5L540.8,275.5M529.8,294.5L548.8,275.5M537.8,294.5L556.8,275.5M545.8,294.5L564.8,275.5M553.8,294.5L572.8,275.5M561.8,294.5L580.8,275.5M569.8,294.5L588.8,275.5M577.8,294.5L596.8,275.5M585.8,294.5L604.8,275.5M593.8,294.5L612.8,275.5M601.8,294.5L620.8,275.5M609.8,294.5L628.8,275.5M617.8,294.5L636.8,275.5M625.8,294.5L644.8,275.5M633.8,294.5L652.8,275.5M641.8,294.5L660.8,275.5M649.8,294.5L668.8,275.5M657.8,294.5L676.8,275.5M665.8,294.5L684.8,275.5M673.8,294.5L692.8,275.5M681.8,294.5L700.8,275.5M689.8,294.5L708.8,275.5M697.8,294.5L716.8,275.5M705.8,294.5L724.8,275.5M713.8,294.5L732.8,275.5M721.8,294.5L740.8,275.5M729.8,294.5L748.8,275.5M737.8,294.5L756.8,275.5M745.8,294.5L764.8,275.5M753.8,294.5L772.8,275.5M761.8,294.5L780.8,275.5M769.8,294.5L788.8,275.5M777.8,294.5L796.8,275.5M785.8,294.5L804.8,275.5M793.8,294.5L812.8,275.5M801.8,294.5L815.5,280.8M809.8,294.5L815.5,288.8" stroke="#fff" stroke-width="0.9" fill="none" shape-rendering="crispEdges"/>
<rect x="495.5" y="275.5" width="320" height="19" fill="none" stroke="#fff" stroke-width="1"/>
<rect x="495.5" y="294.5" width="320" height="22" fill="#000" stroke="none"/>
<path d="M495.5,310.2L501.8,316.5M495.5,302.2L509.8,316.5M495.8,294.5L517.8,316.5M503.8,294.5L525.8,316.5M511.8,294.5L533.8,316.5M519.8,294.5L541.8,316.5M527.8,294.5L549.8,316.5M535.8,294.5L557.8,316.5M543.8,294.5L565.8,316.5M551.8,294.5L573.8,316.5M559.8,294.5L581.8,316.5M567.8,294.5L589.8,316.5M575.8,294.5L597.8,316.5M583.8,294.5L605.8,316.5M591.8,294.5L613.8,316.5M599.8,294.5L621.8,316.5M607.8,294.5L629.8,316.5M615.8,294.5L637.8,316.5M623.8,294.5L645.8,316.5M631.8,294.5L653.8,316.5M639.8,294.5L661.8,316.5M647.8,294.5L669.8,316.5M655.8,294.5L677.8,316.5M663.8,294.5L685.8,316.5M671.8,294.5L693.8,316.5M679.8,294.5L701.8,316.5M687.8,294.5L709.8,316.5M695.8,294.5L717.8,316.5M703.8,294.5L725.8,316.5M711.8,294.5L733.8,316.5M719.8,294.5L741.8,316.5M727.8,294.5L749.8,316.5M735.8,294.5L757.8,316.5M743.8,294.5L765.8,316.5M751.8,294.5L773.8,316.5M759.8,294.5L781.8,316.5M767.8,294.5L789.8,316.5M775.8,294.5L797.8,316.5M783.8,294.5L805.8,316.5M791.8,294.5L813.8,316.5M799.8,294.5L815.5,310.2M807.8,294.5L815.5,302.2" stroke="#fff" stroke-width="0.9" fill="none" shape-rendering="crispEdges"/>
<rect x="495.5" y="294.5" width="320" height="22" fill="none" stroke="#fff" stroke-width="1"/>
<rect x="495.5" y="321.5" width="320" height="23" fill="#000" stroke="none"/>
<path d="M495.5,328.8L502.8,321.5M495.5,336.8L510.8,321.5M495.8,344.5L518.8,321.5M503.8,344.5L526.8,321.5M511.8,344.5L534.8,321.5M519.8,344.5L542.8,321.5M527.8,344.5L550.8,321.5M535.8,344.5L558.8,321.5M543.8,344.5L566.8,321.5M551.8,344.5L574.8,321.5M559.8,344.5L582.8,321.5M567.8,344.5L590.8,321.5M575.8,344.5L598.8,321.5M583.8,344.5L606.8,321.5M591.8,344.5L614.8,321.5M599.8,344.5L622.8,321.5M607.8,344.5L630.8,321.5M615.8,344.5L638.8,321.5M623.8,344.5L646.8,321.5M631.8,344.5L654.8,321.5M639.8,344.5L662.8,321.5M647.8,344.5L670.8,321.5M655.8,344.5L678.8,321.5M663.8,344.5L686.8,321.5M671.8,344.5L694.8,321.5M679.8,344.5L702.8,321.5M687.8,344.5L710.8,321.5M695.8,344.5L718.8,321.5M703.8,344.5L726.8,321.5M711.8,344.5L734.8,321.5M719.8,344.5L742.8,321.5M727.8,344.5L750.8,321.5M735.8,344.5L758.8,321.5M743.8,344.5L766.8,321.5M751.8,344.5L774.8,321.5M759.8,344.5L782.8,321.5M767.8,344.5L790.8,321.5M775.8,344.5L798.8,321.5M783.8,344.5L806.8,321.5M791.8,344.5L814.8,321.5M799.8,344.5L815.5,328.8M807.8,344.5L815.5,336.8" stroke="#fff" stroke-width="0.9" fill="none" shape-rendering="crispEdges"/>
<rect x="495.5" y="321.5" width="320" height="23" fill="none" stroke="#fff" stroke-width="1"/>
<line x1="495.5" y1="97.5" x2="495.5" y2="344.5" stroke="#fff" stroke-width="1"/>
<line x1="815.5" y1="97.5" x2="815.5" y2="344.5" stroke="#fff" stroke-width="1"/>
<rect x="568.5" y="147.5" width="174" height="27" fill="#000" stroke="none"/>
<path d="M568.5,151L572,147.5M568.5,156.6L577.6,147.5M568.5,162.2L583.2,147.5M568.5,167.8L588.8,147.5M568.5,173.4L594.4,147.5M573,174.5L600,147.5M578.6,174.5L605.6,147.5M584.2,174.5L611.2,147.5M589.8,174.5L616.8,147.5M595.4,174.5L622.4,147.5M601,174.5L628,147.5M606.6,174.5L633.6,147.5M612.2,174.5L639.2,147.5M617.8,174.5L644.8,147.5M623.4,174.5L650.4,147.5M629,174.5L656,147.5M634.6,174.5L661.6,147.5M640.2,174.5L667.2,147.5M645.8,174.5L672.8,147.5M651.4,174.5L678.4,147.5M657,174.5L684,147.5M662.6,174.5L689.6,147.5M668.2,174.5L695.2,147.5M673.8,174.5L700.8,147.5M679.4,174.5L706.4,147.5M685,174.5L712,147.5M690.6,174.5L717.6,147.5M696.2,174.5L723.2,147.5M701.8,174.5L728.8,147.5M707.4,174.5L734.4,147.5M713,174.5L740,147.5M718.6,174.5L742.5,150.6M724.2,174.5L742.5,156.2M729.8,174.5L742.5,161.8M735.4,174.5L742.5,167.4M741,174.5L742.5,173" stroke="#fff" stroke-width="0.9" fill="none" shape-rendering="crispEdges"/>
<rect x="568.5" y="147.5" width="174" height="27" fill="none" stroke="#fff" stroke-width="1"/>
<rect x="568.5" y="175.5" width="174" height="27" fill="#000" stroke="none"/>
<path d="M568.5,201.1L569.9,202.5M568.5,195.5L575.5,202.5M568.5,189.9L581.1,202.5M568.5,184.3L586.7,202.5M568.5,178.7L592.3,202.5M570.9,175.5L597.9,202.5M576.5,175.5L603.5,202.5M582.1,175.5L609.1,202.5M587.7,175.5L614.7,202.5M593.3,175.5L620.3,202.5M598.9,175.5L625.9,202.5M604.5,175.5L631.5,202.5M610.1,175.5L637.1,202.5M615.7,175.5L642.7,202.5M621.3,175.5L648.3,202.5M626.9,175.5L653.9,202.5M632.5,175.5L659.5,202.5M638.1,175.5L665.1,202.5M643.7,175.5L670.7,202.5M649.3,175.5L676.3,202.5M654.9,175.5L681.9,202.5M660.5,175.5L687.5,202.5M666.1,175.5L693.1,202.5M671.7,175.5L698.7,202.5M677.3,175.5L704.3,202.5M682.9,175.5L709.9,202.5M688.5,175.5L715.5,202.5M694.1,175.5L721.1,202.5M699.7,175.5L726.7,202.5M705.3,175.5L732.3,202.5M710.9,175.5L737.9,202.5M716.5,175.5L742.5,201.5M722.1,175.5L742.5,195.9M727.7,175.5L742.5,190.3M733.3,175.5L742.5,184.7M738.9,175.5L742.5,179.1" stroke="#fff" stroke-width="0.9" fill="none" shape-rendering="crispEdges"/>
<rect x="568.5" y="175.5" width="174" height="27" fill="none" stroke="#fff" stroke-width="1"/>
<clipPath id="cp2"><polygon points="595.5,147.5 643.5,147.5 643.5,151.5 640.5,151.5 640.5,174.5 598.5,174.5 598.5,151.5 595.5,151.5"/></clipPath>
<polygon points="595.5,147.5 643.5,147.5 643.5,151.5 640.5,151.5 640.5,174.5 598.5,174.5 598.5,151.5 595.5,151.5" fill="#000" stroke="none"/>
<path d="M595.5,170.2L599.8,174.5M595.5,166.2L603.8,174.5M595.5,162.2L607.8,174.5M595.5,158.2L611.8,174.5M595.5,154.2L615.8,174.5M595.5,150.2L619.8,174.5M596.8,147.5L623.8,174.5M600.8,147.5L627.8,174.5M604.8,147.5L631.8,174.5M608.8,147.5L635.8,174.5M612.8,147.5L639.8,174.5M616.8,147.5L643.5,174.2M620.8,147.5L643.5,170.2M624.8,147.5L643.5,166.2M628.8,147.5L643.5,162.2M632.8,147.5L643.5,158.2M636.8,147.5L643.5,154.2M640.8,147.5L643.5,150.2" stroke="#fff" stroke-width="0.8" fill="none" shape-rendering="crispEdges" clip-path="url(#cp2)"/>
<polygon points="595.5,147.5 643.5,147.5 643.5,151.5 640.5,151.5 640.5,174.5 598.5,174.5 598.5,151.5 595.5,151.5" fill="none" stroke="#fff" stroke-width="1"/>
<clipPath id="cp3"><polygon points="669.5,147.5 717.5,147.5 717.5,151.5 714.5,151.5 714.5,174.5 672.5,174.5 672.5,151.5 669.5,151.5"/></clipPath>
<polygon points="669.5,147.5 717.5,147.5 717.5,151.5 714.5,151.5 714.5,174.5 672.5,174.5 672.5,151.5 669.5,151.5" fill="#000" stroke="none"/>
<path d="M669.5,172.2L671.8,174.5M669.5,168.2L675.8,174.5M669.5,164.2L679.8,174.5M669.5,160.2L683.8,174.5M669.5,156.2L687.8,174.5M669.5,152.2L691.8,174.5M669.5,148.2L695.8,174.5M672.8,147.5L699.8,174.5M676.8,147.5L703.8,174.5M680.8,147.5L707.8,174.5M684.8,147.5L711.8,174.5M688.8,147.5L715.8,174.5M692.8,147.5L717.5,172.2M696.8,147.5L717.5,168.2M700.8,147.5L717.5,164.2M704.8,147.5L717.5,160.2M708.8,147.5L717.5,156.2M712.8,147.5L717.5,152.2M716.8,147.5L717.5,148.2" stroke="#fff" stroke-width="0.8" fill="none" shape-rendering="crispEdges" clip-path="url(#cp3)"/>
<polygon points="669.5,147.5 717.5,147.5 717.5,151.5 714.5,151.5 714.5,174.5 672.5,174.5 672.5,151.5 669.5,151.5" fill="none" stroke="#fff" stroke-width="1"/>
<rect x="601.5" y="87.5" width="109" height="14" fill="#000" stroke="#000" stroke-width="1"/>
<rect x="601.5" y="87.5" width="13" height="14" fill="#000" stroke="none"/>
<path d="M601.5,100.2L602.8,101.5M601.5,96.2L606.8,101.5M601.5,92.2L610.8,101.5M601.5,88.2L614.5,101.2M604.8,87.5L614.5,97.2M608.8,87.5L614.5,93.2M612.8,87.5L614.5,89.2" stroke="#5a9a3c" stroke-width="0.8" fill="none" shape-rendering="crispEdges"/>
<rect x="601.5" y="87.5" width="13" height="14" fill="none" stroke="#fff" stroke-width="1"/>
<rect x="697.5" y="87.5" width="13" height="14" fill="#000" stroke="none"/>
<path d="M697.5,100.2L698.8,101.5M697.5,96.2L702.8,101.5M697.5,92.2L706.8,101.5M697.5,88.2L710.5,101.2M700.8,87.5L710.5,97.2M704.8,87.5L710.5,93.2M708.8,87.5L710.5,89.2" stroke="#5a9a3c" stroke-width="0.8" fill="none" shape-rendering="crispEdges"/>
<rect x="697.5" y="87.5" width="13" height="14" fill="none" stroke="#fff" stroke-width="1"/>
<rect x="614.5" y="87.5" width="83" height="13" fill="#000" stroke="#fff" stroke-width="1"/>
<line x1="601" y1="87.5" x2="710.5" y2="87.5" stroke="#fff" stroke-width="1"/>
<rect x="603.5" y="88.5" width="8" height="5" fill="#000" stroke="#fff" stroke-width="1"/>
<rect x="605.5" y="93.5" width="4" height="19" fill="#000" stroke="#000" stroke-width="1"/>
<line x1="605.5" y1="93" x2="605.5" y2="111" stroke="#5a9a3c" stroke-width="1"/>
<line x1="609.5" y1="93" x2="609.5" y2="111" stroke="#5a9a3c" stroke-width="1"/>
<circle cx="607.5" cy="113" r="1.6" fill="#fff" stroke="#fff" stroke-width="1" shape-rendering="geometricPrecision"/>
<line x1="607.5" y1="86" x2="607.5" y2="112" stroke="#ff0000" stroke-width="1" stroke-dasharray="9 2 2 2"/>
<rect x="699.5" y="88.5" width="8" height="5" fill="#000" stroke="#fff" stroke-width="1"/>
<rect x="701.5" y="93.5" width="4" height="19" fill="#000" stroke="#000" stroke-width="1"/>
<line x1="701.5" y1="93" x2="701.5" y2="111" stroke="#5a9a3c" stroke-width="1"/>
<line x1="705.5" y1="93" x2="705.5" y2="111" stroke="#5a9a3c" stroke-width="1"/>
<circle cx="703.5" cy="113" r="1.6" fill="#fff" stroke="#fff" stroke-width="1" shape-rendering="geometricPrecision"/>
<line x1="703.5" y1="86" x2="703.5" y2="112" stroke="#ff0000" stroke-width="1" stroke-dasharray="9 2 2 2"/>
<line x1="601.5" y1="74.5" x2="601.5" y2="87.5" stroke="#fff" stroke-width="1"/>
<line x1="710.5" y1="74.5" x2="710.5" y2="87.5" stroke="#fff" stroke-width="1"/>
<line x1="601" y1="76.5" x2="710.5" y2="76.5" stroke="#fff" stroke-width="1"/>
<text transform="translate(656 74.5) scale(0.8 1)" font-size="7" fill="#fff" text-anchor="middle" font-family="&quot;Liberation Sans&quot;, &quot;Noto Sans CJK SC&quot;, sans-serif" font-weight="bold">Φ120</text>
<text transform="translate(667 70) scale(0.8 1)" font-size="4" fill="#fff" text-anchor="start" font-family="&quot;Liberation Sans&quot;, &quot;Noto Sans CJK SC&quot;, sans-serif" font-weight="bold">H7</text>
<text transform="translate(667 75) scale(0.8 1)" font-size="4" fill="#fff" text-anchor="start" font-family="&quot;Liberation Sans&quot;, &quot;Noto Sans CJK SC&quot;, sans-serif" font-weight="bold">f6</text>
<rect x="639.5" y="100.5" width="33" height="5" fill="#000" stroke="#fff" stroke-width="1"/>
<rect x="639.5" y="100.5" width="33" height="5" fill="#000" stroke="none"/>
<path d="M639.5,102.2L642.8,105.5M641.8,100.5L646.8,105.5M645.8,100.5L650.8,105.5M649.8,100.5L654.8,105.5M653.8,100.5L658.8,105.5M657.8,100.5L662.8,105.5M661.8,100.5L666.8,105.5M665.8,100.5L670.8,105.5M669.8,100.5L672.5,103.2" stroke="#5a9a3c" stroke-width="0.8" fill="none" shape-rendering="crispEdges"/>
<rect x="639.5" y="100.5" width="33" height="5" fill="none" stroke="#fff" stroke-width="1"/>
<rect x="641.5" y="101.5" width="7" height="4" fill="#000" stroke="#fff" stroke-width="1"/>
<rect x="642.5" y="105.5" width="4" height="14" fill="#000" stroke="#000" stroke-width="1"/>
<line x1="642.5" y1="105.5" x2="642.5" y2="119" stroke="#5a9a3c" stroke-width="1"/>
<line x1="646.5" y1="105.5" x2="646.5" y2="119" stroke="#5a9a3c" stroke-width="1"/>
<line x1="644.5" y1="100" x2="644.5" y2="119.5" stroke="#ff0000" stroke-width="1"/>
<rect x="663.5" y="101.5" width="7" height="4" fill="#000" stroke="#fff" stroke-width="1"/>
<rect x="664.5" y="105.5" width="4" height="14" fill="#000" stroke="#000" stroke-width="1"/>
<line x1="664.5" y1="105.5" x2="664.5" y2="119" stroke="#5a9a3c" stroke-width="1"/>
<line x1="668.5" y1="105.5" x2="668.5" y2="119" stroke="#5a9a3c" stroke-width="1"/>
<line x1="666.5" y1="100" x2="666.5" y2="119.5" stroke="#ff0000" stroke-width="1"/>
<rect x="650.5" y="105.5" width="11" height="70" fill="#000" stroke="#000" stroke-width="1"/>
<rect x="650.5" y="105.5" width="11" height="66" fill="#000" stroke="none"/>
<path d="M650.5,169.2L652.8,171.5M650.5,165.2L656.8,171.5M650.5,161.2L660.8,171.5M650.5,157.2L661.5,168.2M650.5,153.2L661.5,164.2M650.5,149.2L661.5,160.2M650.5,145.2L661.5,156.2M650.5,141.2L661.5,152.2M650.5,137.2L661.5,148.2M650.5,133.2L661.5,144.2M650.5,129.2L661.5,140.2M650.5,125.2L661.5,136.2M650.5,121.2L661.5,132.2M650.5,117.2L661.5,128.2M650.5,113.2L661.5,124.2M650.5,109.2L661.5,120.2M650.8,105.5L661.5,116.2M654.8,105.5L661.5,112.2M658.8,105.5L661.5,108.2" stroke="#5a9a3c" stroke-width="0.8" fill="none" shape-rendering="crispEdges"/>
<line x1="650.5" y1="105.5" x2="650.5" y2="171" stroke="#fff" stroke-width="1"/>
<line x1="661.5" y1="105.5" x2="661.5" y2="171" stroke="#fff" stroke-width="1"/>
<polygon points="655.6,101 655,171 657.5,171 656.9,101" fill="#5a9a3c" stroke="#5a9a3c" stroke-width="1"/>
<rect x="636.5" y="171.5" width="39" height="6" fill="#4c8433" stroke="#5a9a3c" stroke-width="1"/>
<rect x="599.5" y="168.5" width="3" height="8" fill="#5a9a3c" stroke="#5a9a3c" stroke-width="1"/>
<rect x="709.5" y="168.5" width="3" height="8" fill="#5a9a3c" stroke="#5a9a3c" stroke-width="1"/>
<rect x="636.5" y="168.5" width="3" height="7" fill="#5a9a3c" stroke="#5a9a3c" stroke-width="1"/>
<rect x="673.5" y="168.5" width="3" height="7" fill="#5a9a3c" stroke="#5a9a3c" stroke-width="1"/>
<rect x="572.5" y="120.5" width="13" height="8" fill="#000" stroke="#fff" stroke-width="1"/>
<rect x="574.5" y="128.5" width="8" height="34" fill="#000" stroke="#fff" stroke-width="1"/>
<line x1="574.5" y1="137" x2="574.5" y2="161.5" stroke="#5a9a3c" stroke-width="1"/>
<line x1="582.5" y1="137" x2="582.5" y2="161.5" stroke="#5a9a3c" stroke-width="1"/>
<path d="M574.7,162.5 L576.2,165.5 L580.8,165.5 L582.3,162.5" fill="#000" stroke="#fff" stroke-width="1"/>
<line x1="574.7" y1="161.5" x2="582.3" y2="161.5" stroke="#fff" stroke-width="1"/>
<line x1="578.5" y1="119" x2="578.5" y2="167" stroke="#ff0000" stroke-width="1" stroke-dasharray="9 2 2 2"/>
<rect x="572.5" y="222.5" width="13" height="8" fill="#000" stroke="#fff" stroke-width="1"/>
<rect x="574.5" y="188.5" width="8" height="34" fill="#000" stroke="#fff" stroke-width="1"/>
<line x1="574.5" y1="189" x2="574.5" y2="208.5" stroke="#5a9a3c" stroke-width="1"/>
<line x1="582.5" y1="189" x2="582.5" y2="208.5" stroke="#5a9a3c" stroke-width="1"/>
<path d="M574.7,188 L576.2,185 L580.8,185 L582.3,188" fill="#000" stroke="#fff" stroke-width="1"/>
<line x1="574.7" y1="189.5" x2="582.3" y2="189.5" stroke="#fff" stroke-width="1"/>
<line x1="578.5" y1="183.5" x2="578.5" y2="231.5" stroke="#ff0000" stroke-width="1" stroke-dasharray="9 2 2 2"/>
<circle cx="589.5" cy="161.5" r="2.5" fill="none" stroke="#fff" stroke-width="1" shape-rendering="geometricPrecision"/>
<circle cx="589.5" cy="189" r="2.5" fill="none" stroke="#fff" stroke-width="1" shape-rendering="geometricPrecision"/>
<rect x="727.5" y="120.5" width="13" height="8" fill="#000" stroke="#fff" stroke-width="1"/>
<rect x="729.5" y="128.5" width="8" height="34" fill="#000" stroke="#fff" stroke-width="1"/>
<line x1="729.5" y1="137" x2="729.5" y2="161.5" stroke="#5a9a3c" stroke-width="1"/>
<line x1="737.5" y1="137" x2="737.5" y2="161.5" stroke="#5a9a3c" stroke-width="1"/>
<path d="M729.7,162.5 L731.2,165.5 L735.8,165.5 L737.3,162.5" fill="#000" stroke="#fff" stroke-width="1"/>
<line x1="729.7" y1="161.5" x2="737.3" y2="161.5" stroke="#fff" stroke-width="1"/>
<line x1="733.5" y1="119" x2="733.5" y2="167" stroke="#ff0000" stroke-width="1" stroke-dasharray="9 2 2 2"/>
<rect x="727.5" y="222.5" width="13" height="8" fill="#000" stroke="#fff" stroke-width="1"/>
<rect x="729.5" y="188.5" width="8" height="34" fill="#000" stroke="#fff" stroke-width="1"/>
<line x1="729.5" y1="189" x2="729.5" y2="208.5" stroke="#5a9a3c" stroke-width="1"/>
<line x1="737.5" y1="189" x2="737.5" y2="208.5" stroke="#5a9a3c" stroke-width="1"/>
<path d="M729.7,188 L731.2,185 L735.8,185 L737.3,188" fill="#000" stroke="#fff" stroke-width="1"/>
<line x1="729.7" y1="189.5" x2="737.3" y2="189.5" stroke="#fff" stroke-width="1"/>
<line x1="733.5" y1="183.5" x2="733.5" y2="231.5" stroke="#ff0000" stroke-width="1" stroke-dasharray="9 2 2 2"/>
<circle cx="722.5" cy="161.5" r="2.5" fill="none" stroke="#fff" stroke-width="1" shape-rendering="geometricPrecision"/>
<circle cx="722.5" cy="189" r="2.5" fill="none" stroke="#fff" stroke-width="1" shape-rendering="geometricPrecision"/>
<rect x="503.5" y="210.5" width="39" height="20" fill="#000" stroke="#fff" stroke-width="1"/>
<rect x="514.5" y="175.5" width="18" height="115" fill="#000" stroke="#000" stroke-width="1"/>
<line x1="514.5" y1="175" x2="514.5" y2="290" stroke="#fff" stroke-width="1"/>
<line x1="532.5" y1="175" x2="532.5" y2="290" stroke="#fff" stroke-width="1"/>
<rect x="511.5" y="290.5" width="24" height="4" fill="#000" stroke="#fff" stroke-width="1"/>
<line x1="523.5" y1="173" x2="523.5" y2="292" stroke="#ff0000" stroke-width="1"/>
<rect x="505.5" y="211.5" width="8" height="3" fill="#000" stroke="#fff" stroke-width="1"/>
<rect x="505.5" y="220.5" width="8" height="2" fill="#000" stroke="#fff" stroke-width="1"/>
<rect x="505.5" y="263.5" width="8" height="3" fill="#000" stroke="#fff" stroke-width="1"/>
<rect x="505.5" y="270.5" width="8" height="2" fill="#000" stroke="#fff" stroke-width="1"/>
<line x1="505.5" y1="223" x2="505.5" y2="263" stroke="#ff00ff" stroke-width="1" stroke-dasharray="6 1.5 1.5 1.5"/>
<line x1="513.5" y1="223" x2="513.5" y2="263" stroke="#ff00ff" stroke-width="1" stroke-dasharray="6 1.5 1.5 1.5"/>
<rect x="533.5" y="211.5" width="9" height="3" fill="#000" stroke="#fff" stroke-width="1"/>
<rect x="533.5" y="220.5" width="9" height="2" fill="#000" stroke="#fff" stroke-width="1"/>
<rect x="533.5" y="263.5" width="9" height="3" fill="#000" stroke="#fff" stroke-width="1"/>
<rect x="533.5" y="270.5" width="9" height="2" fill="#000" stroke="#fff" stroke-width="1"/>
<line x1="534.5" y1="223" x2="534.5" y2="263" stroke="#ff00ff" stroke-width="1" stroke-dasharray="6 1.5 1.5 1.5"/>
<line x1="541.5" y1="223" x2="541.5" y2="263" stroke="#ff00ff" stroke-width="1" stroke-dasharray="6 1.5 1.5 1.5"/>
<line x1="513.5" y1="211.5" x2="520" y2="211.5" stroke="#00c8c8" stroke-width="1"/>
<line x1="527" y1="211.5" x2="533.5" y2="211.5" stroke="#00c8c8" stroke-width="1"/>
<line x1="513.5" y1="214.5" x2="520" y2="214.5" stroke="#00c8c8" stroke-width="1"/>
<line x1="527" y1="214.5" x2="533.5" y2="214.5" stroke="#00c8c8" stroke-width="1"/>
<line x1="513.5" y1="220.5" x2="520" y2="220.5" stroke="#00c8c8" stroke-width="1"/>
<line x1="527" y1="220.5" x2="533.5" y2="220.5" stroke="#00c8c8" stroke-width="1"/>
<line x1="513.5" y1="222.5" x2="520" y2="222.5" stroke="#00c8c8" stroke-width="1"/>
<line x1="527" y1="222.5" x2="533.5" y2="222.5" stroke="#00c8c8" stroke-width="1"/>
<line x1="513.5" y1="263.5" x2="520" y2="263.5" stroke="#00c8c8" stroke-width="1"/>
<line x1="527" y1="263.5" x2="533.5" y2="263.5" stroke="#00c8c8" stroke-width="1"/>
<line x1="513.5" y1="266.5" x2="520" y2="266.5" stroke="#00c8c8" stroke-width="1"/>
<line x1="527" y1="266.5" x2="533.5" y2="266.5" stroke="#00c8c8" stroke-width="1"/>
<line x1="513.5" y1="270.5" x2="520" y2="270.5" stroke="#00c8c8" stroke-width="1"/>
<line x1="527" y1="270.5" x2="533.5" y2="270.5" stroke="#00c8c8" stroke-width="1"/>
<line x1="513.5" y1="272.5" x2="520" y2="272.5" stroke="#00c8c8" stroke-width="1"/>
<line x1="527" y1="272.5" x2="533.5" y2="272.5" stroke="#00c8c8" stroke-width="1"/>
<text transform="translate(523.5 192) scale(0.75 1)" font-size="5" fill="#5a9a3c" text-anchor="middle" font-family="&quot;Liberation Sans&quot;, &quot;Noto Sans CJK SC&quot;, sans-serif" font-weight="bold">Φ20H7</text>
<line x1="517" y1="195.5" x2="529" y2="195.5" stroke="#5a9a3c" stroke-width="1"/>
<rect x="603.5" y="230.5" width="4" height="45" fill="#000" stroke="#000" stroke-width="1"/>
<line x1="603.5" y1="230.5" x2="603.5" y2="275.5" stroke="#fff" stroke-width="1"/>
<line x1="607.5" y1="230.5" x2="607.5" y2="275.5" stroke="#fff" stroke-width="1"/>
<line x1="605.5" y1="228.5" x2="605.5" y2="276.5" stroke="#ff0000" stroke-width="1" stroke-dasharray="10 2 2 2"/>
<rect x="631.5" y="230.5" width="4" height="45" fill="#000" stroke="#000" stroke-width="1"/>
<line x1="631.5" y1="230.5" x2="631.5" y2="275.5" stroke="#fff" stroke-width="1"/>
<line x1="635.5" y1="230.5" x2="635.5" y2="275.5" stroke="#fff" stroke-width="1"/>
<line x1="633.5" y1="228.5" x2="633.5" y2="276.5" stroke="#ff0000" stroke-width="1" stroke-dasharray="10 2 2 2"/>
<rect x="675.5" y="230.5" width="4" height="45" fill="#000" stroke="#000" stroke-width="1"/>
<line x1="675.5" y1="230.5" x2="675.5" y2="275.5" stroke="#fff" stroke-width="1"/>
<line x1="679.5" y1="230.5" x2="679.5" y2="275.5" stroke="#fff" stroke-width="1"/>
<line x1="677.5" y1="228.5" x2="677.5" y2="276.5" stroke="#ff0000" stroke-width="1" stroke-dasharray="10 2 2 2"/>
<rect x="703.5" y="230.5" width="4" height="45" fill="#000" stroke="#000" stroke-width="1"/>
<line x1="703.5" y1="230.5" x2="703.5" y2="275.5" stroke="#fff" stroke-width="1"/>
<line x1="707.5" y1="230.5" x2="707.5" y2="275.5" stroke="#fff" stroke-width="1"/>
<line x1="705.5" y1="228.5" x2="705.5" y2="276.5" stroke="#ff0000" stroke-width="1" stroke-dasharray="10 2 2 2"/>
<rect x="652.5" y="178.5" width="7" height="111" fill="#000" stroke="#000" stroke-width="1"/>
<line x1="652.5" y1="178.5" x2="652.5" y2="289" stroke="#fff" stroke-width="1"/>
<line x1="659.5" y1="178.5" x2="659.5" y2="289" stroke="#fff" stroke-width="1"/>
<rect x="650.5" y="288.5" width="11" height="6" fill="#000" stroke="#fff" stroke-width="1"/>
<line x1="655.5" y1="179" x2="655.5" y2="291" stroke="#ff0000" stroke-width="1"/>
<line x1="646" y1="191.5" x2="650" y2="191.5" stroke="#5a9a3c" stroke-width="1"/>
<line x1="664" y1="191.5" x2="680" y2="191.5" stroke="#5a9a3c" stroke-width="1"/>
<line x1="655.5" y1="189" x2="655.5" y2="194" stroke="#5a9a3c" stroke-width="1"/>
<text transform="translate(672 189) scale(0.75 1)" font-size="5" fill="#5a9a3c" text-anchor="middle" font-family="&quot;Liberation Sans&quot;, &quot;Noto Sans CJK SC&quot;, sans-serif" font-weight="bold">Φ5H7</text>
<rect x="639.5" y="323.5" width="33" height="19" fill="#000" stroke="#fff" stroke-width="1"/>
<rect x="796.5" y="276.5" width="8" height="26" fill="#000" stroke="#000" stroke-width="1"/>
<line x1="796.5" y1="276" x2="796.5" y2="302" stroke="#5a9a3c" stroke-width="1"/>
<line x1="804.5" y1="276" x2="804.5" y2="302" stroke="#5a9a3c" stroke-width="1"/>
<rect x="797.5" y="302.5" width="6" height="6" fill="#000" stroke="#fff" stroke-width="1"/>
<rect x="794.5" y="308.5" width="12" height="7" fill="#000" stroke="#fff" stroke-width="1"/>
<line x1="800.5" y1="275" x2="800.5" y2="317" stroke="#ff0000" stroke-width="1"/>
<rect x="516.5" y="316.5" width="14" height="4" fill="#000" stroke="#fff" stroke-width="1"/>
<rect x="520.5" y="320.5" width="7" height="11" fill="#000" stroke="#fff" stroke-width="1"/>
<path d="M520,331 L521.5,333 L525.5,333 L527,331" fill="none" stroke="#fff" stroke-width="1"/>
<line x1="523.5" y1="318" x2="523.5" y2="334" stroke="#ff0000" stroke-width="1"/>
<rect x="782.5" y="316.5" width="14" height="4" fill="#000" stroke="#fff" stroke-width="1"/>
<rect x="786.5" y="320.5" width="7" height="11" fill="#000" stroke="#fff" stroke-width="1"/>
<path d="M786,331 L787.5,333 L791.5,333 L793,331" fill="none" stroke="#fff" stroke-width="1"/>
<line x1="789.5" y1="318" x2="789.5" y2="334" stroke="#ff0000" stroke-width="1"/>
<text transform="translate(656.5 47.5) scale(0.85 1)" font-size="7.5" fill="#ff00ff" text-anchor="middle" font-family="&quot;Liberation Sans&quot;, &quot;Noto Sans CJK SC&quot;, sans-serif" font-weight="bold">B-B</text>
<text transform="translate(577 61) scale(0.76 1)" font-size="11.2" fill="#fff" text-anchor="start" font-family="&quot;Liberation Sans&quot;, &quot;Noto Sans CJK SC&quot;, sans-serif">17</text>
<line x1="576" y1="64.5" x2="589" y2="64.5" stroke="#fff" stroke-width="1"/>
<line x1="589" y1="64.5" x2="601" y2="84" stroke="#fff" stroke-width="1"/>
<text transform="translate(600 61) scale(0.76 1)" font-size="11.2" fill="#fff" text-anchor="start" font-family="&quot;Liberation Sans&quot;, &quot;Noto Sans CJK SC&quot;, sans-serif">18</text>
<line x1="598" y1="64.5" x2="612" y2="64.5" stroke="#fff" stroke-width="1"/>
<line x1="612" y1="64.5" x2="612" y2="88" stroke="#fff" stroke-width="1"/>
<text transform="translate(659 61) scale(0.76 1)" font-size="11.2" fill="#fff" text-anchor="start" font-family="&quot;Liberation Sans&quot;, &quot;Noto Sans CJK SC&quot;, sans-serif">19</text>
<line x1="657" y1="64.5" x2="671" y2="64.5" stroke="#fff" stroke-width="1"/>
<line x1="657" y1="64.5" x2="652" y2="104" stroke="#fff" stroke-width="1"/>
<text transform="translate(667 356) scale(0.76 1)" font-size="11.2" fill="#fff" text-anchor="start" font-family="&quot;Liberation Sans&quot;, &quot;Noto Sans CJK SC&quot;, sans-serif">20</text>
<line x1="656" y1="285" x2="666" y2="360" stroke="#5a9a3c" stroke-width="1"/>
<text transform="translate(488.5 359) scale(0.76 1)" font-size="11.2" fill="#fff" text-anchor="start" font-family="&quot;Liberation Sans&quot;, &quot;Noto Sans CJK SC&quot;, sans-serif">23</text>
<line x1="488" y1="362.5" x2="503" y2="362.5" stroke="#fff" stroke-width="1"/>
<line x1="488" y1="362.5" x2="506" y2="270" stroke="#fff" stroke-width="1"/>
<text transform="translate(506 359) scale(0.76 1)" font-size="11.2" fill="#fff" text-anchor="start" font-family="&quot;Liberation Sans&quot;, &quot;Noto Sans CJK SC&quot;, sans-serif">22</text>
<line x1="505" y1="362.5" x2="519" y2="362.5" stroke="#fff" stroke-width="1"/>
<line x1="505" y1="362.5" x2="518" y2="320" stroke="#fff" stroke-width="1"/>
<text transform="translate(532 359) scale(0.76 1)" font-size="11.2" fill="#fff" text-anchor="start" font-family="&quot;Liberation Sans&quot;, &quot;Noto Sans CJK SC&quot;, sans-serif">21</text>
<line x1="531" y1="362.5" x2="545" y2="362.5" stroke="#fff" stroke-width="1"/>
<line x1="531" y1="362.5" x2="525" y2="292" stroke="#fff" stroke-width="1"/>
</g>
<g id="plan">
<line x1="55" y1="388.5" x2="410.5" y2="388.5" stroke="#fff" stroke-width="1"/>
<line x1="55" y1="707.5" x2="410.5" y2="707.5" stroke="#fff" stroke-width="1"/>
<line x1="56.5" y1="388.5" x2="56.5" y2="707.5" stroke="#fff" stroke-width="1"/>
<line x1="90.5" y1="388.5" x2="90.5" y2="754" stroke="#fff" stroke-width="1"/>
<line x1="113.5" y1="388.5" x2="113.5" y2="732" stroke="#fff" stroke-width="1"/>
<line x1="387.5" y1="388.5" x2="387.5" y2="732" stroke="#fff" stroke-width="1"/>
<line x1="410.5" y1="388.5" x2="410.5" y2="754" stroke="#fff" stroke-width="1"/>
<line x1="113.5" y1="731.5" x2="387.5" y2="731.5" stroke="#fff" stroke-width="1"/>
<line x1="90.5" y1="753.5" x2="410.5" y2="753.5" stroke="#fff" stroke-width="1"/>
<text transform="translate(250 730) scale(0.8 1)" font-size="6.5" fill="#fff" text-anchor="middle" font-family="&quot;Liberation Sans&quot;, &quot;Noto Sans CJK SC&quot;, sans-serif" font-weight="bold">300</text>
<text transform="translate(250 752) scale(0.8 1)" font-size="6.5" fill="#fff" text-anchor="middle" font-family="&quot;Liberation Sans&quot;, &quot;Noto Sans CJK SC&quot;, sans-serif" font-weight="bold">350</text>
<text transform="translate(54 548) rotate(-90) scale(0.8 1)" font-size="6.5" fill="#fff" text-anchor="middle" font-family="&quot;Liberation Sans&quot;, &quot;Noto Sans CJK SC&quot;, sans-serif" font-weight="bold">350</text>
<line x1="168.5" y1="635" x2="168.5" y2="707" stroke="#fff" stroke-width="1" stroke-dasharray="7 3"/>
<line x1="332.5" y1="635" x2="332.5" y2="707" stroke="#fff" stroke-width="1" stroke-dasharray="7 3"/>
<circle cx="189.5" cy="415.5" r="20" fill="none" stroke="#fff" stroke-width="1" stroke-dasharray="9 4"/>
<circle cx="189.5" cy="415.5" r="15" fill="none" stroke="#00c8c8" stroke-width="1" stroke-dasharray="7 3"/>
<circle cx="189.5" cy="415.5" r="9.5" fill="none" stroke="#fff" stroke-width="1"/>
<circle cx="189.5" cy="415.5" r="8" fill="none" stroke="#fff" stroke-width="1"/>
<line x1="168.5" y1="415.5" x2="210.5" y2="415.5" stroke="#ff0000" stroke-width="1"/>
<line x1="189.5" y1="394.5" x2="189.5" y2="436.5" stroke="#ff0000" stroke-width="1"/>
<circle cx="189.5" cy="680.5" r="20" fill="none" stroke="#fff" stroke-width="1" stroke-dasharray="9 4"/>
<circle cx="189.5" cy="680.5" r="15" fill="none" stroke="#00c8c8" stroke-width="1" stroke-dasharray="7 3"/>
<circle cx="189.5" cy="680.5" r="9.5" fill="none" stroke="#fff" stroke-width="1"/>
<circle cx="189.5" cy="680.5" r="8" fill="none" stroke="#fff" stroke-width="1"/>
<line x1="168.5" y1="680.5" x2="210.5" y2="680.5" stroke="#ff0000" stroke-width="1"/>
<line x1="189.5" y1="659.5" x2="189.5" y2="701.5" stroke="#ff0000" stroke-width="1"/>
<circle cx="311.5" cy="415.5" r="20" fill="none" stroke="#fff" stroke-width="1" stroke-dasharray="9 4"/>
<circle cx="311.5" cy="415.5" r="15" fill="none" stroke="#00c8c8" stroke-width="1" stroke-dasharray="7 3"/>
<circle cx="311.5" cy="415.5" r="9.5" fill="none" stroke="#fff" stroke-width="1"/>
<circle cx="311.5" cy="415.5" r="8" fill="none" stroke="#fff" stroke-width="1"/>
<line x1="290.5" y1="415.5" x2="332.5" y2="415.5" stroke="#ff0000" stroke-width="1"/>
<line x1="311.5" y1="394.5" x2="311.5" y2="436.5" stroke="#ff0000" stroke-width="1"/>
<circle cx="311.5" cy="680.5" r="20" fill="none" stroke="#fff" stroke-width="1" stroke-dasharray="9 4"/>
<circle cx="311.5" cy="680.5" r="15" fill="none" stroke="#00c8c8" stroke-width="1" stroke-dasharray="7 3"/>
<circle cx="311.5" cy="680.5" r="9.5" fill="none" stroke="#fff" stroke-width="1"/>
<circle cx="311.5" cy="680.5" r="8" fill="none" stroke="#fff" stroke-width="1"/>
<line x1="290.5" y1="680.5" x2="332.5" y2="680.5" stroke="#ff0000" stroke-width="1"/>
<line x1="311.5" y1="659.5" x2="311.5" y2="701.5" stroke="#ff0000" stroke-width="1"/>
<circle cx="143.5" cy="418" r="13.5" fill="none" stroke="#fff" stroke-width="1" stroke-dasharray="8 3"/>
<circle cx="143.5" cy="418" r="11" fill="none" stroke="#fff" stroke-width="1"/>
<line x1="128.5" y1="418.5" x2="158.5" y2="418.5" stroke="#ff0000" stroke-width="1"/>
<line x1="143.5" y1="403" x2="143.5" y2="433" stroke="#ff0000" stroke-width="1"/>
<circle cx="357.5" cy="418" r="13.5" fill="none" stroke="#fff" stroke-width="1"/>
<circle cx="357.5" cy="418" r="11" fill="none" stroke="#fff" stroke-width="1"/>
<line x1="342.5" y1="418.5" x2="372.5" y2="418.5" stroke="#ff0000" stroke-width="1"/>
<line x1="357.5" y1="403" x2="357.5" y2="433" stroke="#ff0000" stroke-width="1"/>
<circle cx="143.5" cy="677.5" r="13.5" fill="none" stroke="#fff" stroke-width="1"/>
<circle cx="143.5" cy="677.5" r="11" fill="none" stroke="#fff" stroke-width="1"/>
<line x1="128.5" y1="677.5" x2="158.5" y2="677.5" stroke="#ff0000" stroke-width="1"/>
<line x1="143.5" y1="662.5" x2="143.5" y2="692.5" stroke="#ff0000" stroke-width="1"/>
<circle cx="357.5" cy="677" r="13.5" fill="none" stroke="#fff" stroke-width="1"/>
<circle cx="357.5" cy="677" r="11" fill="none" stroke="#fff" stroke-width="1"/>
<line x1="342.5" y1="677.5" x2="372.5" y2="677.5" stroke="#ff0000" stroke-width="1"/>
<line x1="357.5" y1="662" x2="357.5" y2="692" stroke="#ff0000" stroke-width="1"/>
<circle cx="140.5" cy="462" r="10.5" fill="none" stroke="#909090" stroke-width="1" stroke-dasharray="5 2"/>
<circle cx="140.5" cy="462" r="8.5" fill="none" stroke="#909090" stroke-width="1"/>
<circle cx="140.5" cy="462" r="5" fill="none" stroke="#909090" stroke-width="1" shape-rendering="geometricPrecision"/>
<line x1="128.5" y1="462.5" x2="152.5" y2="462.5" stroke="#ff0000" stroke-width="1"/>
<line x1="140.5" y1="450" x2="140.5" y2="474" stroke="#ff0000" stroke-width="1"/>
<circle cx="140.5" cy="548.5" r="10.5" fill="none" stroke="#909090" stroke-width="1" stroke-dasharray="5 2"/>
<circle cx="140.5" cy="548.5" r="8.5" fill="none" stroke="#909090" stroke-width="1"/>
<circle cx="140.5" cy="548.5" r="5" fill="none" stroke="#909090" stroke-width="1" shape-rendering="geometricPrecision"/>
<line x1="128.5" y1="548.5" x2="152.5" y2="548.5" stroke="#ff0000" stroke-width="1"/>
<line x1="140.5" y1="536.5" x2="140.5" y2="560.5" stroke="#ff0000" stroke-width="1"/>
<circle cx="140.5" cy="634" r="10.5" fill="none" stroke="#909090" stroke-width="1" stroke-dasharray="5 2"/>
<circle cx="140.5" cy="634" r="8.5" fill="none" stroke="#909090" stroke-width="1"/>
<circle cx="140.5" cy="634" r="5" fill="none" stroke="#909090" stroke-width="1" shape-rendering="geometricPrecision"/>
<line x1="128.5" y1="634.5" x2="152.5" y2="634.5" stroke="#ff0000" stroke-width="1"/>
<line x1="140.5" y1="622" x2="140.5" y2="646" stroke="#ff0000" stroke-width="1"/>
<circle cx="359.5" cy="462" r="10.5" fill="none" stroke="#909090" stroke-width="1" stroke-dasharray="5 2"/>
<circle cx="359.5" cy="462" r="8.5" fill="none" stroke="#909090" stroke-width="1"/>
<circle cx="359.5" cy="462" r="5" fill="none" stroke="#909090" stroke-width="1" shape-rendering="geometricPrecision"/>
<line x1="347.5" y1="462.5" x2="371.5" y2="462.5" stroke="#ff0000" stroke-width="1"/>
<line x1="359.5" y1="450" x2="359.5" y2="474" stroke="#ff0000" stroke-width="1"/>
<circle cx="359.5" cy="548.5" r="10.5" fill="none" stroke="#909090" stroke-width="1" stroke-dasharray="5 2"/>
<circle cx="359.5" cy="548.5" r="8.5" fill="none" stroke="#909090" stroke-width="1"/>
<circle cx="359.5" cy="548.5" r="5" fill="none" stroke="#909090" stroke-width="1" shape-rendering="geometricPrecision"/>
<line x1="347.5" y1="548.5" x2="371.5" y2="548.5" stroke="#ff0000" stroke-width="1"/>
<line x1="359.5" y1="536.5" x2="359.5" y2="560.5" stroke="#ff0000" stroke-width="1"/>
<circle cx="359.5" cy="634" r="10.5" fill="none" stroke="#909090" stroke-width="1" stroke-dasharray="5 2"/>
<circle cx="359.5" cy="634" r="8.5" fill="none" stroke="#909090" stroke-width="1"/>
<circle cx="359.5" cy="634" r="5" fill="none" stroke="#909090" stroke-width="1" shape-rendering="geometricPrecision"/>
<line x1="347.5" y1="634.5" x2="371.5" y2="634.5" stroke="#ff0000" stroke-width="1"/>
<line x1="359.5" y1="622" x2="359.5" y2="646" stroke="#ff0000" stroke-width="1"/>
<rect x="168.5" y="461.5" width="164" height="173" fill="none" stroke="#fff" stroke-width="1" rx="8"/>
<path d="M317.5,461.5 L317.5,476.5 Q317.5,479.5 320.5,479.5 L332.5,479.5" fill="none" stroke="#fff" stroke-width="1"/>
<path d="M317.5,634.5 L317.5,619.5 Q317.5,616.5 320.5,616.5 L332.5,616.5" fill="none" stroke="#fff" stroke-width="1"/>
<line x1="192" y1="479.5" x2="313" y2="479.5" stroke="#fff" stroke-width="1" stroke-dasharray="6 2.5"/>
<line x1="192" y1="610.5" x2="313" y2="610.5" stroke="#fff" stroke-width="1" stroke-dasharray="6 2.5"/>
<line x1="186.5" y1="486" x2="186.5" y2="527" stroke="#fff" stroke-width="1" stroke-dasharray="6 2.5"/>
<line x1="186.5" y1="570" x2="186.5" y2="610" stroke="#fff" stroke-width="1" stroke-dasharray="6 2.5"/>
<line x1="308.5" y1="486" x2="308.5" y2="610" stroke="#fff" stroke-width="1" stroke-dasharray="6 2.5"/>
<line x1="116" y1="527.5" x2="186" y2="527.5" stroke="#fff" stroke-width="1" stroke-dasharray="6 2.5"/>
<line x1="116" y1="563.5" x2="186" y2="563.5" stroke="#fff" stroke-width="1" stroke-dasharray="6 2.5"/>
<line x1="192" y1="485.5" x2="313" y2="485.5" stroke="#fff" stroke-width="1" stroke-dasharray="6 2.5"/>
<line x1="192" y1="616.5" x2="313" y2="616.5" stroke="#fff" stroke-width="1" stroke-dasharray="6 2.5"/>
<line x1="192.5" y1="486" x2="192.5" y2="527" stroke="#fff" stroke-width="1" stroke-dasharray="6 2.5"/>
<line x1="192.5" y1="570" x2="192.5" y2="610" stroke="#fff" stroke-width="1" stroke-dasharray="6 2.5"/>
<line x1="314.5" y1="486" x2="314.5" y2="610" stroke="#fff" stroke-width="1" stroke-dasharray="6 2.5"/>
<line x1="116" y1="533.5" x2="186" y2="533.5" stroke="#fff" stroke-width="1" stroke-dasharray="6 2.5"/>
<line x1="116" y1="569.5" x2="186" y2="569.5" stroke="#fff" stroke-width="1" stroke-dasharray="6 2.5"/>
<line x1="192" y1="482.5" x2="313" y2="482.5" stroke="#ff0000" stroke-width="1" stroke-dasharray="45 9 10 9"/>
<line x1="192" y1="613.5" x2="313" y2="613.5" stroke="#ff0000" stroke-width="1" stroke-dasharray="45 9 10 9"/>
<line x1="189.5" y1="485" x2="189.5" y2="530" stroke="#ff0000" stroke-width="1"/>
<line x1="189.5" y1="566" x2="189.5" y2="611" stroke="#ff0000" stroke-width="1"/>
<line x1="311.5" y1="483" x2="311.5" y2="613" stroke="#ff0000" stroke-width="1" stroke-dasharray="40 6"/>
<line x1="113" y1="530.5" x2="190" y2="530.5" stroke="#ff0000" stroke-width="1" stroke-dasharray="28 5 8 5"/>
<line x1="113" y1="566.5" x2="190" y2="566.5" stroke="#ff0000" stroke-width="1" stroke-dasharray="28 5 8 5"/>
<circle cx="189.5" cy="530" r="4.5" fill="none" stroke="#fff" stroke-width="1" stroke-dasharray="4 1.5" shape-rendering="geometricPrecision"/>
<circle cx="189.5" cy="566" r="4.5" fill="none" stroke="#fff" stroke-width="1" stroke-dasharray="4 1.5" shape-rendering="geometricPrecision"/>
<circle cx="189.5" cy="530" r="2.5" fill="none" stroke="#fff" stroke-width="1" shape-rendering="geometricPrecision"/>
<circle cx="189.5" cy="566" r="2.5" fill="none" stroke="#fff" stroke-width="1" shape-rendering="geometricPrecision"/>
<rect x="185.5" y="462.5" width="7" height="9" fill="none" stroke="#fff" stroke-width="1"/>
<line x1="186" y1="465.5" x2="191.5" y2="465.5" stroke="#fff" stroke-width="1"/>
<line x1="186" y1="468.5" x2="191.5" y2="468.5" stroke="#fff" stroke-width="1"/>
<line x1="186.5" y1="471" x2="186.5" y2="479.5" stroke="#fff" stroke-width="1"/>
<line x1="191.5" y1="471" x2="191.5" y2="479.5" stroke="#fff" stroke-width="1"/>
<rect x="185.5" y="625.5" width="7" height="8" fill="none" stroke="#fff" stroke-width="1"/>
<line x1="186" y1="630.5" x2="191.5" y2="630.5" stroke="#fff" stroke-width="1"/>
<line x1="186" y1="628.5" x2="191.5" y2="628.5" stroke="#fff" stroke-width="1"/>
<line x1="186.5" y1="616.5" x2="186.5" y2="625" stroke="#fff" stroke-width="1"/>
<line x1="191.5" y1="616.5" x2="191.5" y2="625" stroke="#fff" stroke-width="1"/>
<rect x="308.5" y="625.5" width="7" height="8" fill="none" stroke="#fff" stroke-width="1"/>
<line x1="309" y1="630.5" x2="314" y2="630.5" stroke="#fff" stroke-width="1"/>
<line x1="309" y1="628.5" x2="314" y2="628.5" stroke="#fff" stroke-width="1"/>
<rect x="169.5" y="479.5" width="8" height="7" fill="none" stroke="#fff" stroke-width="1"/>
<line x1="172.5" y1="479" x2="172.5" y2="486" stroke="#fff" stroke-width="1"/>
<line x1="174.5" y1="479" x2="174.5" y2="486" stroke="#fff" stroke-width="1"/>
<line x1="177.5" y1="480.5" x2="186" y2="480.5" stroke="#fff" stroke-width="1"/>
<line x1="177.5" y1="485.5" x2="186" y2="485.5" stroke="#fff" stroke-width="1"/>
<rect x="169.5" y="610.5" width="8" height="7" fill="none" stroke="#fff" stroke-width="1"/>
<line x1="172.5" y1="610" x2="172.5" y2="617" stroke="#fff" stroke-width="1"/>
<line x1="174.5" y1="610" x2="174.5" y2="617" stroke="#fff" stroke-width="1"/>
<line x1="177.5" y1="611.5" x2="186" y2="611.5" stroke="#fff" stroke-width="1"/>
<line x1="177.5" y1="616.5" x2="186" y2="616.5" stroke="#fff" stroke-width="1"/>
<rect x="90.5" y="525.5" width="16" height="9" fill="#000" stroke="#fff" stroke-width="1"/>
<line x1="94.5" y1="525.5" x2="94.5" y2="534.5" stroke="#fff" stroke-width="1"/>
<line x1="97.5" y1="525.5" x2="97.5" y2="534.5" stroke="#fff" stroke-width="1"/>
<line x1="101.5" y1="525.5" x2="101.5" y2="534.5" stroke="#fff" stroke-width="1"/>
<rect x="106.5" y="524.5" width="3" height="12" fill="#000" stroke="#fff" stroke-width="1"/>
<rect x="109.5" y="522.5" width="4" height="16" fill="#000" stroke="#fff" stroke-width="1"/>
<rect x="113.5" y="526.5" width="7" height="8" fill="none" stroke="#fff" stroke-width="1"/>
<rect x="90.5" y="561.5" width="16" height="9" fill="#000" stroke="#fff" stroke-width="1"/>
<line x1="94.5" y1="561.5" x2="94.5" y2="570.5" stroke="#fff" stroke-width="1"/>
<line x1="97.5" y1="561.5" x2="97.5" y2="570.5" stroke="#fff" stroke-width="1"/>
<line x1="101.5" y1="561.5" x2="101.5" y2="570.5" stroke="#fff" stroke-width="1"/>
<rect x="106.5" y="560.5" width="3" height="12" fill="#000" stroke="#fff" stroke-width="1"/>
<rect x="109.5" y="558.5" width="4" height="16" fill="#000" stroke="#fff" stroke-width="1"/>
<rect x="113.5" y="562.5" width="7" height="8" fill="none" stroke="#fff" stroke-width="1"/>
<path d="M202,491.5 L299,491.5 Q303,511.5 299,531.5 L202,531.5 Q196.5,511.5 202,491.5 Z" fill="none" stroke="#fff" stroke-width="1"/>
<circle cx="250.5" cy="511.5" r="20.5" fill="#000" stroke="#fff" stroke-width="1"/>
<circle cx="250.5" cy="511.5" r="19.3" fill="none" stroke="#fff" stroke-width="1"/>
<circle cx="250.5" cy="511.5" r="16" fill="none" stroke="#fff" stroke-width="1"/>
<circle cx="205" cy="498.5" r="2.3" fill="none" stroke="#909090" stroke-width="1" shape-rendering="geometricPrecision"/>
<line x1="202" y1="498.5" x2="208" y2="498.5" stroke="#ff0000" stroke-width="1"/>
<line x1="205.5" y1="495.5" x2="205.5" y2="501.5" stroke="#ff0000" stroke-width="1"/>
<circle cx="205" cy="526.5" r="2.3" fill="none" stroke="#909090" stroke-width="1" shape-rendering="geometricPrecision"/>
<line x1="202" y1="526.5" x2="208" y2="526.5" stroke="#ff0000" stroke-width="1"/>
<line x1="205.5" y1="523.5" x2="205.5" y2="529.5" stroke="#ff0000" stroke-width="1"/>
<circle cx="223.5" cy="498.5" r="2.3" fill="none" stroke="#909090" stroke-width="1" shape-rendering="geometricPrecision"/>
<line x1="220.5" y1="498.5" x2="226.5" y2="498.5" stroke="#ff0000" stroke-width="1"/>
<line x1="223.5" y1="495.5" x2="223.5" y2="501.5" stroke="#ff0000" stroke-width="1"/>
<circle cx="223.5" cy="526.5" r="2.3" fill="none" stroke="#909090" stroke-width="1" shape-rendering="geometricPrecision"/>
<line x1="220.5" y1="526.5" x2="226.5" y2="526.5" stroke="#ff0000" stroke-width="1"/>
<line x1="223.5" y1="523.5" x2="223.5" y2="529.5" stroke="#ff0000" stroke-width="1"/>
<circle cx="277.5" cy="498.5" r="2.3" fill="none" stroke="#909090" stroke-width="1" shape-rendering="geometricPrecision"/>
<line x1="274.5" y1="498.5" x2="280.5" y2="498.5" stroke="#ff0000" stroke-width="1"/>
<line x1="277.5" y1="495.5" x2="277.5" y2="501.5" stroke="#ff0000" stroke-width="1"/>
<circle cx="277.5" cy="526.5" r="2.3" fill="none" stroke="#909090" stroke-width="1" shape-rendering="geometricPrecision"/>
<line x1="274.5" y1="526.5" x2="280.5" y2="526.5" stroke="#ff0000" stroke-width="1"/>
<line x1="277.5" y1="523.5" x2="277.5" y2="529.5" stroke="#ff0000" stroke-width="1"/>
<circle cx="296.5" cy="498.5" r="2.3" fill="none" stroke="#909090" stroke-width="1" shape-rendering="geometricPrecision"/>
<line x1="293.5" y1="498.5" x2="299.5" y2="498.5" stroke="#ff0000" stroke-width="1"/>
<line x1="296.5" y1="495.5" x2="296.5" y2="501.5" stroke="#ff0000" stroke-width="1"/>
<circle cx="296.5" cy="526.5" r="2.3" fill="none" stroke="#909090" stroke-width="1" shape-rendering="geometricPrecision"/>
<line x1="293.5" y1="526.5" x2="299.5" y2="526.5" stroke="#ff0000" stroke-width="1"/>
<line x1="296.5" y1="523.5" x2="296.5" y2="529.5" stroke="#ff0000" stroke-width="1"/>
<path d="M202,565.5 L299,565.5 Q303,585.5 299,605.5 L202,605.5 Q196.5,585.5 202,565.5 Z" fill="none" stroke="#fff" stroke-width="1"/>
<circle cx="250.5" cy="585.5" r="20.5" fill="#000" stroke="#fff" stroke-width="1"/>
<circle cx="250.5" cy="585.5" r="19.3" fill="none" stroke="#fff" stroke-width="1"/>
<circle cx="250.5" cy="585.5" r="16" fill="none" stroke="#fff" stroke-width="1"/>
<circle cx="205" cy="598.5" r="2.3" fill="none" stroke="#909090" stroke-width="1" shape-rendering="geometricPrecision"/>
<line x1="202" y1="598.5" x2="208" y2="598.5" stroke="#ff0000" stroke-width="1"/>
<line x1="205.5" y1="595.5" x2="205.5" y2="601.5" stroke="#ff0000" stroke-width="1"/>
<circle cx="205" cy="570.5" r="2.3" fill="none" stroke="#909090" stroke-width="1" shape-rendering="geometricPrecision"/>
<line x1="202" y1="570.5" x2="208" y2="570.5" stroke="#ff0000" stroke-width="1"/>
<line x1="205.5" y1="567.5" x2="205.5" y2="573.5" stroke="#ff0000" stroke-width="1"/>
<circle cx="223.5" cy="598.5" r="2.3" fill="none" stroke="#909090" stroke-width="1" shape-rendering="geometricPrecision"/>
<line x1="220.5" y1="598.5" x2="226.5" y2="598.5" stroke="#ff0000" stroke-width="1"/>
<line x1="223.5" y1="595.5" x2="223.5" y2="601.5" stroke="#ff0000" stroke-width="1"/>
<circle cx="223.5" cy="570.5" r="2.3" fill="none" stroke="#909090" stroke-width="1" shape-rendering="geometricPrecision"/>
<line x1="220.5" y1="570.5" x2="226.5" y2="570.5" stroke="#ff0000" stroke-width="1"/>
<line x1="223.5" y1="567.5" x2="223.5" y2="573.5" stroke="#ff0000" stroke-width="1"/>
<circle cx="277.5" cy="598.5" r="2.3" fill="none" stroke="#909090" stroke-width="1" shape-rendering="geometricPrecision"/>
<line x1="274.5" y1="598.5" x2="280.5" y2="598.5" stroke="#ff0000" stroke-width="1"/>
<line x1="277.5" y1="595.5" x2="277.5" y2="601.5" stroke="#ff0000" stroke-width="1"/>
<circle cx="277.5" cy="570.5" r="2.3" fill="none" stroke="#909090" stroke-width="1" shape-rendering="geometricPrecision"/>
<line x1="274.5" y1="570.5" x2="280.5" y2="570.5" stroke="#ff0000" stroke-width="1"/>
<line x1="277.5" y1="567.5" x2="277.5" y2="573.5" stroke="#ff0000" stroke-width="1"/>
<circle cx="296.5" cy="598.5" r="2.3" fill="none" stroke="#909090" stroke-width="1" shape-rendering="geometricPrecision"/>
<line x1="293.5" y1="598.5" x2="299.5" y2="598.5" stroke="#ff0000" stroke-width="1"/>
<line x1="296.5" y1="595.5" x2="296.5" y2="601.5" stroke="#ff0000" stroke-width="1"/>
<circle cx="296.5" cy="570.5" r="2.3" fill="none" stroke="#909090" stroke-width="1" shape-rendering="geometricPrecision"/>
<line x1="293.5" y1="570.5" x2="299.5" y2="570.5" stroke="#ff0000" stroke-width="1"/>
<line x1="296.5" y1="567.5" x2="296.5" y2="573.5" stroke="#ff0000" stroke-width="1"/>
<rect x="247.5" y="532.5" width="6" height="33" fill="none" stroke="#fff" stroke-width="1" rx="3"/>
<line x1="90" y1="548.5" x2="378" y2="548.5" stroke="#ff0000" stroke-width="1" stroke-dasharray="40 8 10 8"/>
<line x1="250.5" y1="388.5" x2="250.5" y2="448" stroke="#ff0000" stroke-width="1" stroke-dasharray="40 8 10 8"/>
<line x1="250.5" y1="650" x2="250.5" y2="707.5" stroke="#ff0000" stroke-width="1"/>
<line x1="232" y1="511.5" x2="270" y2="511.5" stroke="#ff0000" stroke-width="1"/>
<line x1="232" y1="585.5" x2="270" y2="585.5" stroke="#ff0000" stroke-width="1"/>
<polyline points="66.5,406 66.5,418.5 162.5,418.5 162.5,511.5 200.5,511.5 200.5,498.5 231.5,498.5 231.5,511.5 272.5,511.5 272.5,498.5 300.5,498.5 300.5,511.5 341.5,511.5 341.5,548.5 430.5,548.5 430.5,536" fill="none" stroke="#ffff00" stroke-width="1" stroke-dasharray="7 1.5 1.5 1.5 1.5 1.5"/>
<line x1="66.5" y1="406" x2="66.5" y2="418.5" stroke="#ffff00" stroke-width="2"/>
<line x1="430.5" y1="536" x2="430.5" y2="548.5" stroke="#ffff00" stroke-width="2"/>
<polyline points="200,385.5 189.5,385.5 189.5,448.5 250.5,448.5 250.5,650.5 311.5,650.5 311.5,740.5 324,740.5" fill="none" stroke="#ffff00" stroke-width="1" stroke-dasharray="7 1.5 1.5 1.5 1.5 1.5"/>
<line x1="189.5" y1="385.5" x2="200" y2="385.5" stroke="#ffff00" stroke-width="2"/>
<line x1="311.5" y1="740.5" x2="324" y2="740.5" stroke="#ffff00" stroke-width="2"/>
<line x1="250.5" y1="449" x2="250.5" y2="650" stroke="#ff0000" stroke-width="1" stroke-dasharray="2 6"/>
<text transform="translate(66 402) scale(0.85 1)" font-size="7.5" fill="#ff00ff" text-anchor="middle" font-family="&quot;Liberation Sans&quot;, &quot;Noto Sans CJK SC&quot;, sans-serif" font-weight="bold">A</text>
<text transform="translate(430.5 532) scale(0.85 1)" font-size="7.5" fill="#ff00ff" text-anchor="middle" font-family="&quot;Liberation Sans&quot;, &quot;Noto Sans CJK SC&quot;, sans-serif" font-weight="bold">A</text>
<text transform="translate(208.5 388) scale(0.85 1)" font-size="7.5" fill="#ff00ff" text-anchor="middle" font-family="&quot;Liberation Sans&quot;, &quot;Noto Sans CJK SC&quot;, sans-serif" font-weight="bold">B</text>
<text transform="translate(330.5 744) scale(0.85 1)" font-size="7.5" fill="#ff00ff" text-anchor="middle" font-family="&quot;Liberation Sans&quot;, &quot;Noto Sans CJK SC&quot;, sans-serif" font-weight="bold">B</text>
<text transform="translate(168 421) scale(0.85 1)" font-size="7.5" fill="#ff00ff" text-anchor="middle" font-family="&quot;Liberation Sans&quot;, &quot;Noto Sans CJK SC&quot;, sans-serif" font-weight="bold">A</text>
<text transform="translate(162.5 520) scale(0.85 1)" font-size="7.5" fill="#ff00ff" text-anchor="middle" font-family="&quot;Liberation Sans&quot;, &quot;Noto Sans CJK SC&quot;, sans-serif" font-weight="bold">A</text>
<text transform="translate(347 514.5) scale(0.85 1)" font-size="7.5" fill="#ff00ff" text-anchor="middle" font-family="&quot;Liberation Sans&quot;, &quot;Noto Sans CJK SC&quot;, sans-serif" font-weight="bold">A</text>
<text transform="translate(342 557) scale(0.85 1)" font-size="7.5" fill="#ff00ff" text-anchor="middle" font-family="&quot;Liberation Sans&quot;, &quot;Noto Sans CJK SC&quot;, sans-serif" font-weight="bold">A</text>
<text transform="translate(189 456.5) scale(0.85 1)" font-size="7.5" fill="#ff00ff" text-anchor="middle" font-family="&quot;Liberation Sans&quot;, &quot;Noto Sans CJK SC&quot;, sans-serif" font-weight="bold">B</text>
<text transform="translate(255.5 451.5) scale(0.85 1)" font-size="7.5" fill="#ff00ff" text-anchor="middle" font-family="&quot;Liberation Sans&quot;, &quot;Noto Sans CJK SC&quot;, sans-serif" font-weight="bold">B</text>
<text transform="translate(250 658.5) scale(0.85 1)" font-size="7.5" fill="#ff00ff" text-anchor="middle" font-family="&quot;Liberation Sans&quot;, &quot;Noto Sans CJK SC&quot;, sans-serif" font-weight="bold">B</text>
<text transform="translate(317 654) scale(0.85 1)" font-size="7.5" fill="#ff00ff" text-anchor="middle" font-family="&quot;Liberation Sans&quot;, &quot;Noto Sans CJK SC&quot;, sans-serif" font-weight="bold">B</text>
<text transform="translate(200 495) scale(0.85 1)" font-size="7.5" fill="#ff00ff" text-anchor="middle" font-family="&quot;Liberation Sans&quot;, &quot;Noto Sans CJK SC&quot;, sans-serif" font-weight="bold">A</text>
<text transform="translate(204.5 514.5) scale(0.85 1)" font-size="7.5" fill="#ff00ff" text-anchor="middle" font-family="&quot;Liberation Sans&quot;, &quot;Noto Sans CJK SC&quot;, sans-serif" font-weight="bold">A</text>
<text transform="translate(235 500.5) scale(0.85 1)" font-size="7.5" fill="#ff00ff" text-anchor="middle" font-family="&quot;Liberation Sans&quot;, &quot;Noto Sans CJK SC&quot;, sans-serif" font-weight="bold">A</text>
<text transform="translate(230 518.5) scale(0.85 1)" font-size="7.5" fill="#ff00ff" text-anchor="middle" font-family="&quot;Liberation Sans&quot;, &quot;Noto Sans CJK SC&quot;, sans-serif" font-weight="bold">A</text>
<text transform="translate(272 495) scale(0.85 1)" font-size="7.5" fill="#ff00ff" text-anchor="middle" font-family="&quot;Liberation Sans&quot;, &quot;Noto Sans CJK SC&quot;, sans-serif" font-weight="bold">A</text>
<text transform="translate(277 514.5) scale(0.85 1)" font-size="7.5" fill="#ff00ff" text-anchor="middle" font-family="&quot;Liberation Sans&quot;, &quot;Noto Sans CJK SC&quot;, sans-serif" font-weight="bold">A</text>
<text transform="translate(297 518.5) scale(0.85 1)" font-size="7.5" fill="#ff00ff" text-anchor="middle" font-family="&quot;Liberation Sans&quot;, &quot;Noto Sans CJK SC&quot;, sans-serif" font-weight="bold">A</text>
<text transform="translate(302 501) scale(0.85 1)" font-size="7.5" fill="#ff00ff" text-anchor="middle" font-family="&quot;Liberation Sans&quot;, &quot;Noto Sans CJK SC&quot;, sans-serif" font-weight="bold">A</text>
</g>
<g id="detail">
<polyline points="894.5,10.5 894.5,175.5 1122.5,175.5" fill="none" stroke="#fff" stroke-width="1"/>
<rect x="958.5" y="56.5" width="35" height="3" fill="none" stroke="#fff" stroke-width="1"/>
<rect x="1031.5" y="56.5" width="37" height="3" fill="none" stroke="#fff" stroke-width="1"/>
<line x1="959" y1="58.5" x2="992" y2="58.5" stroke="#fff" stroke-width="1" stroke-dasharray="2 1.2"/>
<line x1="1032" y1="58.5" x2="1067" y2="58.5" stroke="#fff" stroke-width="1" stroke-dasharray="2 1.2"/>
<line x1="1068" y1="59.5" x2="1088" y2="59.5" stroke="#fff" stroke-width="1"/>
<rect x="991.5" y="50.5" width="40" height="9" fill="#000" stroke="#fff" stroke-width="1"/>
<line x1="991.5" y1="52.5" x2="1031.5" y2="52.5" stroke="#fff" stroke-width="1"/>
<line x1="994.5" y1="40" x2="994.5" y2="59" stroke="#fff" stroke-width="1"/>
<line x1="1027.5" y1="40" x2="1027.5" y2="59" stroke="#fff" stroke-width="1"/>
<line x1="991.5" y1="22" x2="991.5" y2="56" stroke="#fff" stroke-width="1"/>
<line x1="1031.5" y1="22" x2="1031.5" y2="50" stroke="#fff" stroke-width="1"/>
<line x1="992" y1="23.5" x2="1031" y2="23.5" stroke="#fff" stroke-width="1"/>
<line x1="992" y1="32.5" x2="1031" y2="32.5" stroke="#fff" stroke-width="1"/>
<line x1="995" y1="41.5" x2="1027" y2="41.5" stroke="#fff" stroke-width="1"/>
<text transform="translate(1011.5 22) scale(0.8 1)" font-size="5" fill="#fff" text-anchor="middle" font-family="&quot;Liberation Sans&quot;, &quot;Noto Sans CJK SC&quot;, sans-serif" font-weight="bold">Φ42</text>
<text transform="translate(1011.5 31) scale(0.8 1)" font-size="5" fill="#fff" text-anchor="middle" font-family="&quot;Liberation Sans&quot;, &quot;Noto Sans CJK SC&quot;, sans-serif" font-weight="bold">Φ42</text>
<text transform="translate(1011.5 40) scale(0.8 1)" font-size="5" fill="#fff" text-anchor="middle" font-family="&quot;Liberation Sans&quot;, &quot;Noto Sans CJK SC&quot;, sans-serif" font-weight="bold">Φ36</text>
<line x1="1011.5" y1="46" x2="1011.5" y2="66" stroke="#ff0000" stroke-width="1"/>
<line x1="1032" y1="47" x2="1067.5" y2="13" stroke="#fff" stroke-width="1"/>
<path d="M1067.5,13 A52,52 0 0 1 1086,55" fill="none" stroke="#fff" stroke-width="1"/>
<line x1="1032" y1="50.5" x2="1081" y2="50.5" stroke="#fff" stroke-width="1"/>
<line x1="1068.5" y1="50" x2="1068.5" y2="59" stroke="#fff" stroke-width="1"/>
<line x1="1068.5" y1="62" x2="1068.5" y2="70" stroke="#fff" stroke-width="1"/>
<line x1="1062" y1="70.5" x2="1068" y2="70.5" stroke="#fff" stroke-width="1"/>
<text transform="translate(1064 69) scale(0.8 1)" font-size="4.5" fill="#fff" text-anchor="middle" font-family="&quot;Liberation Sans&quot;, &quot;Noto Sans CJK SC&quot;, sans-serif" font-weight="bold">3</text>
<text transform="translate(1078 55) rotate(-90) scale(0.8 1)" font-size="5" fill="#fff" text-anchor="middle" font-family="&quot;Liberation Sans&quot;, &quot;Noto Sans CJK SC&quot;, sans-serif" font-weight="bold">50</text>
<text transform="translate(1079 32) rotate(60) scale(0.8 1)" font-size="5" fill="#fff" text-anchor="middle" font-family="&quot;Liberation Sans&quot;, &quot;Noto Sans CJK SC&quot;, sans-serif" font-weight="bold">45°</text>
<path d="M963,104.5 L1060,104.5 Q1067,125 1060,145.5 L963,145.5 Q955.5,125 963,104.5 Z" fill="none" stroke="#fff" stroke-width="1"/>
<circle cx="1011.5" cy="124.5" r="20.3" fill="#000" stroke="#fff" stroke-width="1"/>
<circle cx="1011.5" cy="124.5" r="19" fill="none" stroke="#fff" stroke-width="1"/>
<circle cx="1011.5" cy="124.5" r="16" fill="none" stroke="#fff" stroke-width="1"/>
<line x1="954" y1="124.5" x2="997" y2="124.5" stroke="#ff0000" stroke-width="1"/>
<line x1="1006" y1="124.5" x2="1015" y2="124.5" stroke="#ff0000" stroke-width="1"/>
<line x1="1023" y1="124.5" x2="1070" y2="124.5" stroke="#ff0000" stroke-width="1"/>
<line x1="1011.5" y1="97" x2="1011.5" y2="153" stroke="#ff0000" stroke-width="1"/>
<text transform="translate(1050 118.5) scale(0.8 1)" font-size="5" fill="#fff" text-anchor="middle" font-family="&quot;Liberation Sans&quot;, &quot;Noto Sans CJK SC&quot;, sans-serif" font-weight="bold">R67</text>
<line x1="1044" y1="119.5" x2="1062" y2="119.5" stroke="#fff" stroke-width="1"/>
</g>
<g id="notes" shape-rendering="geometricPrecision">
<rect x="473" y="379" width="179" height="42" fill="#c0c0c0"/>
<text transform="translate(505 410)" font-size="25" fill="#111" text-anchor="middle" font-family="&quot;Liberation Serif&quot;, &quot;Noto Serif CJK SC&quot;, serif">图</text>
<text transform="translate(545 410)" font-size="25" fill="#111" text-anchor="middle" font-family="&quot;Liberation Serif&quot;, &quot;Noto Serif CJK SC&quot;, serif">文</text>
<text transform="translate(586 410)" font-size="25" fill="#111" text-anchor="middle" font-family="&quot;Liberation Serif&quot;, &quot;Noto Serif CJK SC&quot;, serif">设</text>
<text transform="translate(625 410)" font-size="25" fill="#111" text-anchor="middle" font-family="&quot;Liberation Serif&quot;, &quot;Noto Serif CJK SC&quot;, serif">计</text>
<text transform="translate(521 446)" font-size="5" fill="#fff" text-anchor="middle" font-family="&quot;Liberation Sans&quot;, &quot;Noto Sans CJK SC&quot;, sans-serif" font-weight="bold">技术要求:</text>
<text x="484" y="459.5" font-size="4.3" fill="#fff" font-weight="bold" textLength="105" lengthAdjust="spacingAndGlyphs" font-family="&quot;Liberation Sans&quot;, &quot;Noto Sans CJK SC&quot;, sans-serif">1.装配前所有零件须清洗干净,去除毛刺,型腔、型芯表面不得有划痕、碰伤等缺陷;</text>
<text x="484" y="464.85" font-size="4.3" fill="#fff" font-weight="bold" textLength="108" lengthAdjust="spacingAndGlyphs" font-family="&quot;Liberation Sans&quot;, &quot;Noto Sans CJK SC&quot;, sans-serif">2.模具闭合后分型面应均匀密合,间隙不大于0.03mm,各活动零件运动灵活、无卡滞;</text>
<text x="484" y="470.2" font-size="4.3" fill="#fff" font-weight="bold" textLength="100" lengthAdjust="spacingAndGlyphs" font-family="&quot;Liberation Sans&quot;, &quot;Noto Sans CJK SC&quot;, sans-serif">3.导柱、导套对模板的垂直度公差不大于0.02mm/100mm;</text>
<text x="484" y="475.55" font-size="4.3" fill="#fff" font-weight="bold" textLength="110" lengthAdjust="spacingAndGlyphs" font-family="&quot;Liberation Sans&quot;, &quot;Noto Sans CJK SC&quot;, sans-serif">4.推杆、复位杆装配后应滑动平稳,推杆端面高出型芯表面0.05~0.1mm;</text>
<text x="484" y="480.9" font-size="4.3" fill="#fff" font-weight="bold" textLength="47" lengthAdjust="spacingAndGlyphs" font-family="&quot;Liberation Sans&quot;, &quot;Noto Sans CJK SC&quot;, sans-serif">5.冷却水道畅通,不得有渗漏现象;</text>
<text x="484" y="486.25" font-size="4.3" fill="#fff" font-weight="bold" textLength="61" lengthAdjust="spacingAndGlyphs" font-family="&quot;Liberation Sans&quot;, &quot;Noto Sans CJK SC&quot;, sans-serif">6.浇口套与定位圈配合良好,主流道光滑;</text>
<text x="484" y="491.6" font-size="4.3" fill="#fff" font-weight="bold" textLength="30" lengthAdjust="spacingAndGlyphs" font-family="&quot;Liberation Sans&quot;, &quot;Noto Sans CJK SC&quot;, sans-serif">7.开模行程不小于60mm;</text>
<text x="484" y="496.95" font-size="4.3" fill="#fff" font-weight="bold" textLength="66" lengthAdjust="spacingAndGlyphs" font-family="&quot;Liberation Sans&quot;, &quot;Noto Sans CJK SC&quot;, sans-serif">8.模具外露棱边均倒角C1,并作防锈处理;</text>
<text x="484" y="502.3" font-size="4.3" fill="#fff" font-weight="bold" textLength="78" lengthAdjust="spacingAndGlyphs" font-family="&quot;Liberation Sans&quot;, &quot;Noto Sans CJK SC&quot;, sans-serif">9.紧固螺钉须拧紧,不得松动,定位销配合可靠;</text>
<text x="484" y="507.65" font-size="4.3" fill="#fff" font-weight="bold" textLength="72" lengthAdjust="spacingAndGlyphs" font-family="&quot;Liberation Sans&quot;, &quot;Noto Sans CJK SC&quot;, sans-serif">10.试模合格后,成型零件表面抛光至Ra0.4;</text>
<text x="484" y="513" font-size="4.3" fill="#fff" font-weight="bold" textLength="118" lengthAdjust="spacingAndGlyphs" font-family="&quot;Liberation Sans&quot;, &quot;Noto Sans CJK SC&quot;, sans-serif">11.塑件不得有飞边、缩孔、熔接痕、气泡等缺陷,尺寸须符合产品图样要求及有关标准规定;</text>
<text x="484" y="518.35" font-size="4.3" fill="#fff" font-weight="bold" textLength="114" lengthAdjust="spacingAndGlyphs" font-family="&quot;Liberation Sans&quot;, &quot;Noto Sans CJK SC&quot;, sans-serif">12.模具总体尺寸350mm×350mm×271mm,适用注射机型号XS-ZY-125,吊装时应保持平稳;</text>
<text x="484" y="523.7" font-size="4.3" fill="#fff" font-weight="bold" textLength="79" lengthAdjust="spacingAndGlyphs" font-family="&quot;Liberation Sans&quot;, &quot;Noto Sans CJK SC&quot;, sans-serif">13.未注明技术要求按GB/T12554-2006执行,其余从略。</text>
</g>
<g id="bom">
<line x1="874.5" y1="477.5" x2="1122.5" y2="477.5" stroke="#fff" stroke-width="1"/>
<line x1="874.5" y1="487.5" x2="1122.5" y2="487.5" stroke="#fff" stroke-width="1"/>
<line x1="874.5" y1="496.5" x2="1122.5" y2="496.5" stroke="#fff" stroke-width="1"/>
<line x1="874.5" y1="506.5" x2="1122.5" y2="506.5" stroke="#fff" stroke-width="1"/>
<line x1="874.5" y1="516.5" x2="1122.5" y2="516.5" stroke="#fff" stroke-width="1"/>
<line x1="874.5" y1="525.5" x2="1122.5" y2="525.5" stroke="#fff" stroke-width="1"/>
<line x1="874.5" y1="535.5" x2="1122.5" y2="535.5" stroke="#fff" stroke-width="1"/>
<line x1="874.5" y1="545.5" x2="1122.5" y2="545.5" stroke="#fff" stroke-width="1"/>
<line x1="874.5" y1="554.5" x2="1122.5" y2="554.5" stroke="#fff" stroke-width="1"/>
<line x1="874.5" y1="564.5" x2="1122.5" y2="564.5" stroke="#fff" stroke-width="1"/>
<line x1="874.5" y1="573.5" x2="1122.5" y2="573.5" stroke="#fff" stroke-width="1"/>
<line x1="874.5" y1="583.5" x2="1122.5" y2="583.5" stroke="#fff" stroke-width="1"/>
<line x1="874.5" y1="593.5" x2="1122.5" y2="593.5" stroke="#fff" stroke-width="1"/>
<line x1="874.5" y1="602.5" x2="1122.5" y2="602.5" stroke="#fff" stroke-width="1"/>
<line x1="874.5" y1="612.5" x2="1122.5" y2="612.5" stroke="#fff" stroke-width="1"/>
<line x1="874.5" y1="622.5" x2="1122.5" y2="622.5" stroke="#fff" stroke-width="1"/>
<line x1="874.5" y1="631.5" x2="1122.5" y2="631.5" stroke="#fff" stroke-width="1"/>
<line x1="874.5" y1="641.5" x2="1122.5" y2="641.5" stroke="#fff" stroke-width="1"/>
<line x1="874.5" y1="651.5" x2="1122.5" y2="651.5" stroke="#fff" stroke-width="1"/>
<line x1="874.5" y1="660.5" x2="1122.5" y2="660.5" stroke="#fff" stroke-width="1"/>
<line x1="874.5" y1="670.5" x2="1122.5" y2="670.5" stroke="#fff" stroke-width="1"/>
<line x1="874.5" y1="680.5" x2="1122.5" y2="680.5" stroke="#fff" stroke-width="1"/>
<line x1="874.5" y1="689.5" x2="1122.5" y2="689.5" stroke="#fff" stroke-width="1"/>
<line x1="874.5" y1="699.5" x2="1122.5" y2="699.5" stroke="#fff" stroke-width="1"/>
<line x1="874.5" y1="477.5" x2="874.5" y2="699.3" stroke="#fff" stroke-width="1"/>
<line x1="885.5" y1="477.5" x2="885.5" y2="699.3" stroke="#fff" stroke-width="1"/>
<line x1="940.5" y1="477.5" x2="940.5" y2="699.3" stroke="#fff" stroke-width="1"/>
<line x1="1001.5" y1="477.5" x2="1001.5" y2="699.3" stroke="#fff" stroke-width="1"/>
<line x1="1012.5" y1="477.5" x2="1012.5" y2="699.3" stroke="#fff" stroke-width="1"/>
<line x1="1064.5" y1="477.5" x2="1064.5" y2="699.3" stroke="#fff" stroke-width="1"/>
<line x1="1078.5" y1="477.5" x2="1078.5" y2="699.3" stroke="#fff" stroke-width="1"/>
<line x1="1095.5" y1="477.5" x2="1095.5" y2="699.3" stroke="#fff" stroke-width="1"/>
<line x1="1122.5" y1="477.5" x2="1122.5" y2="699.3" stroke="#fff" stroke-width="1"/>
<line x1="1001.5" y1="474" x2="1001.5" y2="477.5" stroke="#fff" stroke-width="1"/>
<text transform="translate(880 485.74) scale(0.7 1)" font-size="9.6" fill="#fff" text-anchor="middle" font-family="&quot;Liberation Sans&quot;, &quot;Noto Sans CJK SC&quot;, sans-serif">23</text>
<text transform="translate(913 484.94) scale(0.8 1)" font-size="7.2" fill="#fff" text-anchor="middle" font-family="&quot;Liberation Sans&quot;, &quot;Noto Sans CJK SC&quot;, sans-serif" font-weight="bold">GB/T119.1-2000</text>
<text transform="translate(971 485.74) scale(0.72 1)" font-size="8.2" fill="#fff" text-anchor="middle" font-family="&quot;Liberation Sans&quot;, &quot;Noto Sans CJK SC&quot;, sans-serif" font-weight="bold">弹簧</text>
<text transform="translate(1007 484.74) scale(0.8 1)" font-size="5.5" fill="#fff" text-anchor="middle" font-family="&quot;Liberation Sans&quot;, &quot;Noto Sans CJK SC&quot;, sans-serif" font-weight="bold">4</text>
<text transform="translate(1038 485.14) scale(0.82 1)" font-size="6.8" fill="#fff" text-anchor="middle" font-family="&quot;Liberation Sans&quot;, &quot;Noto Sans CJK SC&quot;, sans-serif" font-weight="bold">65Mn</text>
<text transform="translate(1096.5 484.74) scale(0.74 1)" font-size="6.8" fill="#fff" text-anchor="start" font-family="&quot;Liberation Sans&quot;, &quot;Noto Sans CJK SC&quot;, sans-serif" font-weight="bold">HRC28-30</text>
<text transform="translate(880 495.39) scale(0.7 1)" font-size="9.6" fill="#fff" text-anchor="middle" font-family="&quot;Liberation Sans&quot;, &quot;Noto Sans CJK SC&quot;, sans-serif">22</text>
<text transform="translate(913 494.59) scale(0.8 1)" font-size="7.2" fill="#fff" text-anchor="middle" font-family="&quot;Liberation Sans&quot;, &quot;Noto Sans CJK SC&quot;, sans-serif" font-weight="bold">M8x10.JB/T7650.5</text>
<text transform="translate(971 495.39) scale(0.72 1)" font-size="8.2" fill="#fff" text-anchor="middle" font-family="&quot;Liberation Sans&quot;, &quot;Noto Sans CJK SC&quot;, sans-serif" font-weight="bold">限位钉</text>
<text transform="translate(1007 494.39) scale(0.8 1)" font-size="5.5" fill="#fff" text-anchor="middle" font-family="&quot;Liberation Sans&quot;, &quot;Noto Sans CJK SC&quot;, sans-serif" font-weight="bold">8</text>
<text transform="translate(1038 494.79) scale(0.82 1)" font-size="6.8" fill="#fff" text-anchor="middle" font-family="&quot;Liberation Sans&quot;, &quot;Noto Sans CJK SC&quot;, sans-serif" font-weight="bold">Q235</text>
<text transform="translate(1096.5 494.39) scale(0.74 1)" font-size="6.8" fill="#fff" text-anchor="start" font-family="&quot;Liberation Sans&quot;, &quot;Noto Sans CJK SC&quot;, sans-serif" font-weight="bold">HRC26-30</text>
<text transform="translate(880 505.03) scale(0.7 1)" font-size="9.6" fill="#fff" text-anchor="middle" font-family="&quot;Liberation Sans&quot;, &quot;Noto Sans CJK SC&quot;, sans-serif">21</text>
<text transform="translate(971 505.03) scale(0.72 1)" font-size="8.2" fill="#fff" text-anchor="middle" font-family="&quot;Liberation Sans&quot;, &quot;Noto Sans CJK SC&quot;, sans-serif" font-weight="bold">复位杆</text>
<text transform="translate(1007 504.03) scale(0.8 1)" font-size="5.5" fill="#fff" text-anchor="middle" font-family="&quot;Liberation Sans&quot;, &quot;Noto Sans CJK SC&quot;, sans-serif" font-weight="bold">4</text>
<text transform="translate(1038 504.43) scale(0.82 1)" font-size="6.8" fill="#fff" text-anchor="middle" font-family="&quot;Liberation Sans&quot;, &quot;Noto Sans CJK SC&quot;, sans-serif" font-weight="bold">T10A</text>
<text transform="translate(1096.5 504.03) scale(0.74 1)" font-size="6.8" fill="#fff" text-anchor="start" font-family="&quot;Liberation Sans&quot;, &quot;Noto Sans CJK SC&quot;, sans-serif" font-weight="bold">HRC56-60</text>
<text transform="translate(880 514.67) scale(0.7 1)" font-size="9.6" fill="#fff" text-anchor="middle" font-family="&quot;Liberation Sans&quot;, &quot;Noto Sans CJK SC&quot;, sans-serif">20</text>
<text transform="translate(971 514.67) scale(0.72 1)" font-size="8.2" fill="#fff" text-anchor="middle" font-family="&quot;Liberation Sans&quot;, &quot;Noto Sans CJK SC&quot;, sans-serif" font-weight="bold">拉料杆</text>
<text transform="translate(1007 513.67) scale(0.8 1)" font-size="5.5" fill="#fff" text-anchor="middle" font-family="&quot;Liberation Sans&quot;, &quot;Noto Sans CJK SC&quot;, sans-serif" font-weight="bold">1</text>
<text transform="translate(1038 514.07) scale(0.82 1)" font-size="6.8" fill="#fff" text-anchor="middle" font-family="&quot;Liberation Sans&quot;, &quot;Noto Sans CJK SC&quot;, sans-serif" font-weight="bold">T10A</text>
<text transform="translate(1096.5 513.67) scale(0.74 1)" font-size="6.8" fill="#fff" text-anchor="start" font-family="&quot;Liberation Sans&quot;, &quot;Noto Sans CJK SC&quot;, sans-serif" font-weight="bold">HRC28-30</text>
<text transform="translate(880 524.32) scale(0.7 1)" font-size="9.6" fill="#fff" text-anchor="middle" font-family="&quot;Liberation Sans&quot;, &quot;Noto Sans CJK SC&quot;, sans-serif">19</text>
<text transform="translate(971 524.32) scale(0.72 1)" font-size="8.2" fill="#fff" text-anchor="middle" font-family="&quot;Liberation Sans&quot;, &quot;Noto Sans CJK SC&quot;, sans-serif" font-weight="bold">浇口套</text>
<text transform="translate(1007 523.32) scale(0.8 1)" font-size="5.5" fill="#fff" text-anchor="middle" font-family="&quot;Liberation Sans&quot;, &quot;Noto Sans CJK SC&quot;, sans-serif" font-weight="bold">1</text>
<text transform="translate(1038 523.72) scale(0.82 1)" font-size="6.8" fill="#fff" text-anchor="middle" font-family="&quot;Liberation Sans&quot;, &quot;Noto Sans CJK SC&quot;, sans-serif" font-weight="bold">T10A</text>
<text transform="translate(1096.5 523.32) scale(0.74 1)" font-size="6.8" fill="#fff" text-anchor="start" font-family="&quot;Liberation Sans&quot;, &quot;Noto Sans CJK SC&quot;, sans-serif" font-weight="bold">HRC24-28</text>
<text transform="translate(880 533.96) scale(0.7 1)" font-size="9.6" fill="#fff" text-anchor="middle" font-family="&quot;Liberation Sans&quot;, &quot;Noto Sans CJK SC&quot;, sans-serif">18</text>
<text transform="translate(971 533.96) scale(0.72 1)" font-size="8.2" fill="#fff" text-anchor="middle" font-family="&quot;Liberation Sans&quot;, &quot;Noto Sans CJK SC&quot;, sans-serif" font-weight="bold">定位圈</text>
<text transform="translate(1007 532.96) scale(0.8 1)" font-size="5.5" fill="#fff" text-anchor="middle" font-family="&quot;Liberation Sans&quot;, &quot;Noto Sans CJK SC&quot;, sans-serif" font-weight="bold">1</text>
<text transform="translate(1038 533.36) scale(0.82 1)" font-size="6.8" fill="#fff" text-anchor="middle" font-family="&quot;Liberation Sans&quot;, &quot;Noto Sans CJK SC&quot;, sans-serif" font-weight="bold">Q235</text>
<text transform="translate(1096.5 532.96) scale(0.74 1)" font-size="6.8" fill="#fff" text-anchor="start" font-family="&quot;Liberation Sans&quot;, &quot;Noto Sans CJK SC&quot;, sans-serif" font-weight="bold">HRC28-30</text>
<text transform="translate(880 543.6) scale(0.7 1)" font-size="9.6" fill="#fff" text-anchor="middle" font-family="&quot;Liberation Sans&quot;, &quot;Noto Sans CJK SC&quot;, sans-serif">17</text>
<text transform="translate(913 542.8) scale(0.8 1)" font-size="7.2" fill="#fff" text-anchor="middle" font-family="&quot;Liberation Sans&quot;, &quot;Noto Sans CJK SC&quot;, sans-serif" font-weight="bold">GB/T70.1-2008</text>
<text transform="translate(971 543.6) scale(0.72 1)" font-size="8.2" fill="#fff" text-anchor="middle" font-family="&quot;Liberation Sans&quot;, &quot;Noto Sans CJK SC&quot;, sans-serif" font-weight="bold">内六角螺丝</text>
<text transform="translate(1007 542.6) scale(0.8 1)" font-size="5.5" fill="#fff" text-anchor="middle" font-family="&quot;Liberation Sans&quot;, &quot;Noto Sans CJK SC&quot;, sans-serif" font-weight="bold">4</text>
<text transform="translate(1038 543) scale(0.82 1)" font-size="6.8" fill="#fff" text-anchor="middle" font-family="&quot;Liberation Sans&quot;, &quot;Noto Sans CJK SC&quot;, sans-serif" font-weight="bold">30</text>
<text transform="translate(880 553.25) scale(0.7 1)" font-size="9.6" fill="#fff" text-anchor="middle" font-family="&quot;Liberation Sans&quot;, &quot;Noto Sans CJK SC&quot;, sans-serif">16</text>
<text transform="translate(971 553.25) scale(0.72 1)" font-size="8.2" fill="#fff" text-anchor="middle" font-family="&quot;Liberation Sans&quot;, &quot;Noto Sans CJK SC&quot;, sans-serif" font-weight="bold">推杆</text>
<text transform="translate(1007 552.25) scale(0.8 1)" font-size="5.5" fill="#fff" text-anchor="middle" font-family="&quot;Liberation Sans&quot;, &quot;Noto Sans CJK SC&quot;, sans-serif" font-weight="bold">16</text>
<text transform="translate(1038 552.65) scale(0.82 1)" font-size="6.8" fill="#fff" text-anchor="middle" font-family="&quot;Liberation Sans&quot;, &quot;Noto Sans CJK SC&quot;, sans-serif" font-weight="bold">T10A</text>
<text transform="translate(1096.5 552.25) scale(0.74 1)" font-size="6.8" fill="#fff" text-anchor="start" font-family="&quot;Liberation Sans&quot;, &quot;Noto Sans CJK SC&quot;, sans-serif" font-weight="bold">HRC28-30</text>
<text transform="translate(880 562.89) scale(0.7 1)" font-size="9.6" fill="#fff" text-anchor="middle" font-family="&quot;Liberation Sans&quot;, &quot;Noto Sans CJK SC&quot;, sans-serif">15</text>
<text transform="translate(971 562.89) scale(0.72 1)" font-size="8.2" fill="#fff" text-anchor="middle" font-family="&quot;Liberation Sans&quot;, &quot;Noto Sans CJK SC&quot;, sans-serif" font-weight="bold">垃圾钉</text>
<text transform="translate(1007 561.89) scale(0.8 1)" font-size="5.5" fill="#fff" text-anchor="middle" font-family="&quot;Liberation Sans&quot;, &quot;Noto Sans CJK SC&quot;, sans-serif" font-weight="bold">4</text>
<text transform="translate(1038 562.29) scale(0.82 1)" font-size="6.8" fill="#fff" text-anchor="middle" font-family="&quot;Liberation Sans&quot;, &quot;Noto Sans CJK SC&quot;, sans-serif" font-weight="bold">Cr12MoV</text>
<text transform="translate(1096.5 561.89) scale(0.74 1)" font-size="6.8" fill="#fff" text-anchor="start" font-family="&quot;Liberation Sans&quot;, &quot;Noto Sans CJK SC&quot;, sans-serif" font-weight="bold">HRC43-48</text>
<text transform="translate(880 572.53) scale(0.7 1)" font-size="9.6" fill="#fff" text-anchor="middle" font-family="&quot;Liberation Sans&quot;, &quot;Noto Sans CJK SC&quot;, sans-serif">14</text>
<text transform="translate(971 572.53) scale(0.72 1)" font-size="8.2" fill="#fff" text-anchor="middle" font-family="&quot;Liberation Sans&quot;, &quot;Noto Sans CJK SC&quot;, sans-serif" font-weight="bold">动模座板</text>
<text transform="translate(1007 571.53) scale(0.8 1)" font-size="5.5" fill="#fff" text-anchor="middle" font-family="&quot;Liberation Sans&quot;, &quot;Noto Sans CJK SC&quot;, sans-serif" font-weight="bold">1</text>
<text transform="translate(1038 571.93) scale(0.82 1)" font-size="6.8" fill="#fff" text-anchor="middle" font-family="&quot;Liberation Sans&quot;, &quot;Noto Sans CJK SC&quot;, sans-serif" font-weight="bold">45</text>
<text transform="translate(880 582.18) scale(0.7 1)" font-size="9.6" fill="#fff" text-anchor="middle" font-family="&quot;Liberation Sans&quot;, &quot;Noto Sans CJK SC&quot;, sans-serif">13</text>
<text transform="translate(971 582.18) scale(0.72 1)" font-size="8.2" fill="#fff" text-anchor="middle" font-family="&quot;Liberation Sans&quot;, &quot;Noto Sans CJK SC&quot;, sans-serif" font-weight="bold">推板</text>
<text transform="translate(1007 581.18) scale(0.8 1)" font-size="5.5" fill="#fff" text-anchor="middle" font-family="&quot;Liberation Sans&quot;, &quot;Noto Sans CJK SC&quot;, sans-serif" font-weight="bold">1</text>
<text transform="translate(1038 581.58) scale(0.82 1)" font-size="6.8" fill="#fff" text-anchor="middle" font-family="&quot;Liberation Sans&quot;, &quot;Noto Sans CJK SC&quot;, sans-serif" font-weight="bold">45</text>
<text transform="translate(880 591.82) scale(0.7 1)" font-size="9.6" fill="#fff" text-anchor="middle" font-family="&quot;Liberation Sans&quot;, &quot;Noto Sans CJK SC&quot;, sans-serif">12</text>
<text transform="translate(913 591.02) scale(0.8 1)" font-size="7.2" fill="#fff" text-anchor="middle" font-family="&quot;Liberation Sans&quot;, &quot;Noto Sans CJK SC&quot;, sans-serif" font-weight="bold">GB/T70.1-2008</text>
<text transform="translate(971 591.82) scale(0.72 1)" font-size="8.2" fill="#fff" text-anchor="middle" font-family="&quot;Liberation Sans&quot;, &quot;Noto Sans CJK SC&quot;, sans-serif" font-weight="bold">推杆固定板</text>
<text transform="translate(1007 590.82) scale(0.8 1)" font-size="5.5" fill="#fff" text-anchor="middle" font-family="&quot;Liberation Sans&quot;, &quot;Noto Sans CJK SC&quot;, sans-serif" font-weight="bold">1</text>
<text transform="translate(1038 591.22) scale(0.82 1)" font-size="6.8" fill="#fff" text-anchor="middle" font-family="&quot;Liberation Sans&quot;, &quot;Noto Sans CJK SC&quot;, sans-serif" font-weight="bold">45</text>
<text transform="translate(880 601.47) scale(0.7 1)" font-size="9.6" fill="#fff" text-anchor="middle" font-family="&quot;Liberation Sans&quot;, &quot;Noto Sans CJK SC&quot;, sans-serif">11</text>
<text transform="translate(971 601.47) scale(0.72 1)" font-size="8.2" fill="#fff" text-anchor="middle" font-family="&quot;Liberation Sans&quot;, &quot;Noto Sans CJK SC&quot;, sans-serif" font-weight="bold">垫块</text>
<text transform="translate(1007 600.47) scale(0.8 1)" font-size="5.5" fill="#fff" text-anchor="middle" font-family="&quot;Liberation Sans&quot;, &quot;Noto Sans CJK SC&quot;, sans-serif" font-weight="bold">2</text>
<text transform="translate(1038 600.87) scale(0.82 1)" font-size="6.8" fill="#fff" text-anchor="middle" font-family="&quot;Liberation Sans&quot;, &quot;Noto Sans CJK SC&quot;, sans-serif" font-weight="bold">45</text>
<text transform="translate(880 611.11) scale(0.7 1)" font-size="9.6" fill="#fff" text-anchor="middle" font-family="&quot;Liberation Sans&quot;, &quot;Noto Sans CJK SC&quot;, sans-serif">10</text>
<text transform="translate(913 610.31) scale(0.8 1)" font-size="7.2" fill="#fff" text-anchor="middle" font-family="&quot;Liberation Sans&quot;, &quot;Noto Sans CJK SC&quot;, sans-serif" font-weight="bold">GB/T70.1-2008</text>
<text transform="translate(971 611.11) scale(0.72 1)" font-size="8.2" fill="#fff" text-anchor="middle" font-family="&quot;Liberation Sans&quot;, &quot;Noto Sans CJK SC&quot;, sans-serif" font-weight="bold">内六角螺丝</text>
<text transform="translate(1007 610.11) scale(0.8 1)" font-size="5.5" fill="#fff" text-anchor="middle" font-family="&quot;Liberation Sans&quot;, &quot;Noto Sans CJK SC&quot;, sans-serif" font-weight="bold">4</text>
<text transform="translate(1038 610.51) scale(0.82 1)" font-size="6.8" fill="#fff" text-anchor="middle" font-family="&quot;Liberation Sans&quot;, &quot;Noto Sans CJK SC&quot;, sans-serif" font-weight="bold">30</text>
<text transform="translate(880 620.75) scale(0.7 1)" font-size="9.6" fill="#fff" text-anchor="middle" font-family="&quot;Liberation Sans&quot;, &quot;Noto Sans CJK SC&quot;, sans-serif">9</text>
<text transform="translate(971 620.75) scale(0.72 1)" font-size="8.2" fill="#fff" text-anchor="middle" font-family="&quot;Liberation Sans&quot;, &quot;Noto Sans CJK SC&quot;, sans-serif" font-weight="bold">动模板</text>
<text transform="translate(1007 619.75) scale(0.8 1)" font-size="5.5" fill="#fff" text-anchor="middle" font-family="&quot;Liberation Sans&quot;, &quot;Noto Sans CJK SC&quot;, sans-serif" font-weight="bold">1</text>
<text transform="translate(1038 620.15) scale(0.82 1)" font-size="6.8" fill="#fff" text-anchor="middle" font-family="&quot;Liberation Sans&quot;, &quot;Noto Sans CJK SC&quot;, sans-serif" font-weight="bold">45</text>
<text transform="translate(880 630.4) scale(0.7 1)" font-size="9.6" fill="#fff" text-anchor="middle" font-family="&quot;Liberation Sans&quot;, &quot;Noto Sans CJK SC&quot;, sans-serif">8</text>
<text transform="translate(971 630.4) scale(0.72 1)" font-size="8.2" fill="#fff" text-anchor="middle" font-family="&quot;Liberation Sans&quot;, &quot;Noto Sans CJK SC&quot;, sans-serif" font-weight="bold">型芯</text>
<text transform="translate(1007 629.4) scale(0.8 1)" font-size="5.5" fill="#fff" text-anchor="middle" font-family="&quot;Liberation Sans&quot;, &quot;Noto Sans CJK SC&quot;, sans-serif" font-weight="bold">1</text>
<text transform="translate(1038 629.8) scale(0.82 1)" font-size="6.8" fill="#fff" text-anchor="middle" font-family="&quot;Liberation Sans&quot;, &quot;Noto Sans CJK SC&quot;, sans-serif" font-weight="bold">Cr12MoV</text>
<text transform="translate(1096.5 629.4) scale(0.74 1)" font-size="6.8" fill="#fff" text-anchor="start" font-family="&quot;Liberation Sans&quot;, &quot;Noto Sans CJK SC&quot;, sans-serif" font-weight="bold">HRC28-30</text>
<text transform="translate(880 640.04) scale(0.7 1)" font-size="9.6" fill="#fff" text-anchor="middle" font-family="&quot;Liberation Sans&quot;, &quot;Noto Sans CJK SC&quot;, sans-serif">7</text>
<text transform="translate(913 639.24) scale(0.8 1)" font-size="7.2" fill="#fff" text-anchor="middle" font-family="&quot;Liberation Sans&quot;, &quot;Noto Sans CJK SC&quot;, sans-serif" font-weight="bold">GB/T70.1-2008</text>
<text transform="translate(971 640.04) scale(0.72 1)" font-size="8.2" fill="#fff" text-anchor="middle" font-family="&quot;Liberation Sans&quot;, &quot;Noto Sans CJK SC&quot;, sans-serif" font-weight="bold">内六角螺丝</text>
<text transform="translate(1007 639.04) scale(0.8 1)" font-size="5.5" fill="#fff" text-anchor="middle" font-family="&quot;Liberation Sans&quot;, &quot;Noto Sans CJK SC&quot;, sans-serif" font-weight="bold">4</text>
<text transform="translate(1038 639.44) scale(0.82 1)" font-size="6.8" fill="#fff" text-anchor="middle" font-family="&quot;Liberation Sans&quot;, &quot;Noto Sans CJK SC&quot;, sans-serif" font-weight="bold">30</text>
<text transform="translate(880 649.68) scale(0.7 1)" font-size="9.6" fill="#fff" text-anchor="middle" font-family="&quot;Liberation Sans&quot;, &quot;Noto Sans CJK SC&quot;, sans-serif">6</text>
<text transform="translate(971 649.68) scale(0.72 1)" font-size="8.2" fill="#fff" text-anchor="middle" font-family="&quot;Liberation Sans&quot;, &quot;Noto Sans CJK SC&quot;, sans-serif" font-weight="bold">镶件</text>
<text transform="translate(1007 648.68) scale(0.8 1)" font-size="5.5" fill="#fff" text-anchor="middle" font-family="&quot;Liberation Sans&quot;, &quot;Noto Sans CJK SC&quot;, sans-serif" font-weight="bold">2</text>
<text transform="translate(1038 649.08) scale(0.82 1)" font-size="6.8" fill="#fff" text-anchor="middle" font-family="&quot;Liberation Sans&quot;, &quot;Noto Sans CJK SC&quot;, sans-serif" font-weight="bold">Cr12MoV</text>
<text transform="translate(1096.5 648.68) scale(0.74 1)" font-size="6.8" fill="#fff" text-anchor="start" font-family="&quot;Liberation Sans&quot;, &quot;Noto Sans CJK SC&quot;, sans-serif" font-weight="bold">HRC43-48</text>
<text transform="translate(880 659.33) scale(0.7 1)" font-size="9.6" fill="#fff" text-anchor="middle" font-family="&quot;Liberation Sans&quot;, &quot;Noto Sans CJK SC&quot;, sans-serif">5</text>
<text transform="translate(971 659.33) scale(0.72 1)" font-size="8.2" fill="#fff" text-anchor="middle" font-family="&quot;Liberation Sans&quot;, &quot;Noto Sans CJK SC&quot;, sans-serif" font-weight="bold">型腔</text>
<text transform="translate(1007 658.33) scale(0.8 1)" font-size="5.5" fill="#fff" text-anchor="middle" font-family="&quot;Liberation Sans&quot;, &quot;Noto Sans CJK SC&quot;, sans-serif" font-weight="bold">1</text>
<text transform="translate(1038 658.73) scale(0.82 1)" font-size="6.8" fill="#fff" text-anchor="middle" font-family="&quot;Liberation Sans&quot;, &quot;Noto Sans CJK SC&quot;, sans-serif" font-weight="bold">Cr12MoV</text>
<text transform="translate(1096.5 658.33) scale(0.74 1)" font-size="6.8" fill="#fff" text-anchor="start" font-family="&quot;Liberation Sans&quot;, &quot;Noto Sans CJK SC&quot;, sans-serif" font-weight="bold">HRC28-30</text>
<text transform="translate(880 668.97) scale(0.7 1)" font-size="9.6" fill="#fff" text-anchor="middle" font-family="&quot;Liberation Sans&quot;, &quot;Noto Sans CJK SC&quot;, sans-serif">4</text>
<text transform="translate(971 668.97) scale(0.72 1)" font-size="8.2" fill="#fff" text-anchor="middle" font-family="&quot;Liberation Sans&quot;, &quot;Noto Sans CJK SC&quot;, sans-serif" font-weight="bold">定模板</text>
<text transform="translate(1007 667.97) scale(0.8 1)" font-size="5.5" fill="#fff" text-anchor="middle" font-family="&quot;Liberation Sans&quot;, &quot;Noto Sans CJK SC&quot;, sans-serif" font-weight="bold">1</text>
<text transform="translate(1038 668.37) scale(0.82 1)" font-size="6.8" fill="#fff" text-anchor="middle" font-family="&quot;Liberation Sans&quot;, &quot;Noto Sans CJK SC&quot;, sans-serif" font-weight="bold">45</text>
<text transform="translate(880 678.61) scale(0.7 1)" font-size="9.6" fill="#fff" text-anchor="middle" font-family="&quot;Liberation Sans&quot;, &quot;Noto Sans CJK SC&quot;, sans-serif">3</text>
<text transform="translate(971 678.61) scale(0.72 1)" font-size="8.2" fill="#fff" text-anchor="middle" font-family="&quot;Liberation Sans&quot;, &quot;Noto Sans CJK SC&quot;, sans-serif" font-weight="bold">导柱</text>
<text transform="translate(1007 677.61) scale(0.8 1)" font-size="5.5" fill="#fff" text-anchor="middle" font-family="&quot;Liberation Sans&quot;, &quot;Noto Sans CJK SC&quot;, sans-serif" font-weight="bold">4</text>
<text transform="translate(1038 678.01) scale(0.82 1)" font-size="6.8" fill="#fff" text-anchor="middle" font-family="&quot;Liberation Sans&quot;, &quot;Noto Sans CJK SC&quot;, sans-serif" font-weight="bold">T10A</text>
<text transform="translate(1096.5 677.61) scale(0.74 1)" font-size="6.8" fill="#fff" text-anchor="start" font-family="&quot;Liberation Sans&quot;, &quot;Noto Sans CJK SC&quot;, sans-serif" font-weight="bold">HRC58-62</text>
<text transform="translate(880 688.26) scale(0.7 1)" font-size="9.6" fill="#fff" text-anchor="middle" font-family="&quot;Liberation Sans&quot;, &quot;Noto Sans CJK SC&quot;, sans-serif">2</text>
<text transform="translate(971 688.26) scale(0.72 1)" font-size="8.2" fill="#fff" text-anchor="middle" font-family="&quot;Liberation Sans&quot;, &quot;Noto Sans CJK SC&quot;, sans-serif" font-weight="bold">导套</text>
<text transform="translate(1007 687.26) scale(0.8 1)" font-size="5.5" fill="#fff" text-anchor="middle" font-family="&quot;Liberation Sans&quot;, &quot;Noto Sans CJK SC&quot;, sans-serif" font-weight="bold">4</text>
<text transform="translate(1038 687.66) scale(0.82 1)" font-size="6.8" fill="#fff" text-anchor="middle" font-family="&quot;Liberation Sans&quot;, &quot;Noto Sans CJK SC&quot;, sans-serif" font-weight="bold">T10A</text>
<text transform="translate(1096.5 687.26) scale(0.74 1)" font-size="6.8" fill="#fff" text-anchor="start" font-family="&quot;Liberation Sans&quot;, &quot;Noto Sans CJK SC&quot;, sans-serif" font-weight="bold">HRC28-30</text>
<text transform="translate(880 697.9) scale(0.7 1)" font-size="9.6" fill="#fff" text-anchor="middle" font-family="&quot;Liberation Sans&quot;, &quot;Noto Sans CJK SC&quot;, sans-serif">1</text>
<text transform="translate(971 697.9) scale(0.72 1)" font-size="8.2" fill="#fff" text-anchor="middle" font-family="&quot;Liberation Sans&quot;, &quot;Noto Sans CJK SC&quot;, sans-serif" font-weight="bold">定模座板</text>
<text transform="translate(1007 696.9) scale(0.8 1)" font-size="5.5" fill="#fff" text-anchor="middle" font-family="&quot;Liberation Sans&quot;, &quot;Noto Sans CJK SC&quot;, sans-serif" font-weight="bold">1</text>
<text transform="translate(1038 697.3) scale(0.82 1)" font-size="6.8" fill="#fff" text-anchor="middle" font-family="&quot;Liberation Sans&quot;, &quot;Noto Sans CJK SC&quot;, sans-serif" font-weight="bold">45</text>
<line x1="874.5" y1="718.5" x2="1122.5" y2="718.5" stroke="#fff" stroke-width="1"/>
<line x1="874.5" y1="699.3" x2="874.5" y2="718.5" stroke="#fff" stroke-width="1"/>
<line x1="885.5" y1="699.3" x2="885.5" y2="718.5" stroke="#fff" stroke-width="1"/>
<line x1="940.5" y1="699.3" x2="940.5" y2="718.5" stroke="#fff" stroke-width="1"/>
<line x1="1001.5" y1="699.3" x2="1001.5" y2="718.5" stroke="#fff" stroke-width="1"/>
<line x1="1012.5" y1="699.3" x2="1012.5" y2="718.5" stroke="#fff" stroke-width="1"/>
<line x1="1064.5" y1="699.3" x2="1064.5" y2="718.5" stroke="#fff" stroke-width="1"/>
<line x1="1095.5" y1="699.3" x2="1095.5" y2="718.5" stroke="#fff" stroke-width="1"/>
<line x1="1064.5" y1="709.5" x2="1095.5" y2="709.5" stroke="#fff" stroke-width="1"/>
<line x1="1078.5" y1="699.3" x2="1078.5" y2="709.5" stroke="#fff" stroke-width="1"/>
<text transform="translate(880 706.5)" font-size="5.5" fill="#fff" text-anchor="middle" font-family="&quot;Liberation Sans&quot;, &quot;Noto Sans CJK SC&quot;, sans-serif" font-weight="bold">序</text>
<text transform="translate(880 715)" font-size="5.5" fill="#fff" text-anchor="middle" font-family="&quot;Liberation Sans&quot;, &quot;Noto Sans CJK SC&quot;, sans-serif" font-weight="bold">号</text>
<text transform="translate(900 713.5) scale(0.7 1)" font-size="10" fill="#fff" text-anchor="middle" font-family="&quot;Liberation Sans&quot;, &quot;Noto Sans CJK SC&quot;, sans-serif">代</text>
<text transform="translate(922 713.5) scale(0.7 1)" font-size="10" fill="#fff" text-anchor="middle" font-family="&quot;Liberation Sans&quot;, &quot;Noto Sans CJK SC&quot;, sans-serif">号</text>
<text transform="translate(961 713.5) scale(0.7 1)" font-size="10" fill="#fff" text-anchor="middle" font-family="&quot;Liberation Sans&quot;, &quot;Noto Sans CJK SC&quot;, sans-serif">名</text>
<text transform="translate(980 713.5) scale(0.7 1)" font-size="10" fill="#fff" text-anchor="middle" font-family="&quot;Liberation Sans&quot;, &quot;Noto Sans CJK SC&quot;, sans-serif">称</text>
<text transform="translate(1007 706.5)" font-size="5.5" fill="#fff" text-anchor="middle" font-family="&quot;Liberation Sans&quot;, &quot;Noto Sans CJK SC&quot;, sans-serif" font-weight="bold">数</text>
<text transform="translate(1007 715)" font-size="5.5" fill="#fff" text-anchor="middle" font-family="&quot;Liberation Sans&quot;, &quot;Noto Sans CJK SC&quot;, sans-serif" font-weight="bold">量</text>
<text transform="translate(1028 713.5) scale(0.7 1)" font-size="10" fill="#fff" text-anchor="middle" font-family="&quot;Liberation Sans&quot;, &quot;Noto Sans CJK SC&quot;, sans-serif">材</text>
<text transform="translate(1047 713.5) scale(0.7 1)" font-size="10" fill="#fff" text-anchor="middle" font-family="&quot;Liberation Sans&quot;, &quot;Noto Sans CJK SC&quot;, sans-serif">料</text>
<text transform="translate(1072 707.5) scale(0.7 1)" font-size="6.5" fill="#fff" text-anchor="middle" font-family="&quot;Liberation Sans&quot;, &quot;Noto Sans CJK SC&quot;, sans-serif" font-weight="bold">单件</text>
<text transform="translate(1087 707.5) scale(0.7 1)" font-size="6.5" fill="#fff" text-anchor="middle" font-family="&quot;Liberation Sans&quot;, &quot;Noto Sans CJK SC&quot;, sans-serif" font-weight="bold">总计</text>
<text transform="translate(1080 716.5) scale(0.75 1)" font-size="6.5" fill="#fff" text-anchor="middle" font-family="&quot;Liberation Sans&quot;, &quot;Noto Sans CJK SC&quot;, sans-serif" font-weight="bold">重量</text>
<text transform="translate(1108 712) scale(0.8 1)" font-size="6.5" fill="#fff" text-anchor="middle" font-family="&quot;Liberation Sans&quot;, &quot;Noto Sans CJK SC&quot;, sans-serif" font-weight="bold">备注</text>
<line x1="874.5" y1="795.5" x2="1122.5" y2="795.5" stroke="#fff" stroke-width="1"/>
<line x1="874.5" y1="477.5" x2="874.5" y2="795.5" stroke="#fff" stroke-width="1"/>
<line x1="874.5" y1="728.5" x2="984.5" y2="728.5" stroke="#fff" stroke-width="1"/>
<line x1="874.5" y1="737.5" x2="984.5" y2="737.5" stroke="#fff" stroke-width="1"/>
<line x1="874.5" y1="747.5" x2="984.5" y2="747.5" stroke="#fff" stroke-width="1"/>
<line x1="874.5" y1="757.5" x2="984.5" y2="757.5" stroke="#fff" stroke-width="1"/>
<line x1="874.5" y1="766.5" x2="984.5" y2="766.5" stroke="#fff" stroke-width="1"/>
<line x1="874.5" y1="776.5" x2="984.5" y2="776.5" stroke="#fff" stroke-width="1"/>
<line x1="874.5" y1="785.5" x2="984.5" y2="785.5" stroke="#fff" stroke-width="1"/>
<line x1="889.5" y1="718.5" x2="889.5" y2="757.5" stroke="#fff" stroke-width="1"/>
<line x1="902.5" y1="718.5" x2="902.5" y2="757.5" stroke="#fff" stroke-width="1"/>
<line x1="915.5" y1="718.5" x2="915.5" y2="757.5" stroke="#fff" stroke-width="1"/>
<line x1="947.5" y1="718.5" x2="947.5" y2="757.5" stroke="#fff" stroke-width="1"/>
<line x1="962.5" y1="718.5" x2="962.5" y2="757.5" stroke="#fff" stroke-width="1"/>
<line x1="984.5" y1="718.5" x2="984.5" y2="795.5" stroke="#fff" stroke-width="1"/>
<line x1="890.5" y1="757.5" x2="890.5" y2="795.5" stroke="#fff" stroke-width="1"/>
<line x1="908.5" y1="757.5" x2="908.5" y2="795.5" stroke="#fff" stroke-width="1"/>
<line x1="930.5" y1="757.5" x2="930.5" y2="795.5" stroke="#fff" stroke-width="1"/>
<line x1="947.5" y1="757.5" x2="947.5" y2="795.5" stroke="#fff" stroke-width="1"/>
<line x1="962.5" y1="757.5" x2="962.5" y2="795.5" stroke="#fff" stroke-width="1"/>
<text transform="translate(881.7 756) scale(0.8 1)" font-size="6.3" fill="#fff" text-anchor="middle" font-family="&quot;Liberation Sans&quot;, &quot;Noto Sans CJK SC&quot;, sans-serif" font-weight="bold">标记</text>
<text transform="translate(895.7 756) scale(0.8 1)" font-size="6.3" fill="#fff" text-anchor="middle" font-family="&quot;Liberation Sans&quot;, &quot;Noto Sans CJK SC&quot;, sans-serif" font-weight="bold">处数</text>
<text transform="translate(909 756) scale(0.8 1)" font-size="6.3" fill="#fff" text-anchor="middle" font-family="&quot;Liberation Sans&quot;, &quot;Noto Sans CJK SC&quot;, sans-serif" font-weight="bold">分区</text>
<text transform="translate(931 756) scale(0.8 1)" font-size="6.3" fill="#fff" text-anchor="middle" font-family="&quot;Liberation Sans&quot;, &quot;Noto Sans CJK SC&quot;, sans-serif" font-weight="bold">更改文件号</text>
<text transform="translate(954.7 756) scale(0.8 1)" font-size="6.3" fill="#fff" text-anchor="middle" font-family="&quot;Liberation Sans&quot;, &quot;Noto Sans CJK SC&quot;, sans-serif" font-weight="bold">签名</text>
<text transform="translate(973.5 756) scale(0.8 1)" font-size="6.3" fill="#fff" text-anchor="middle" font-family="&quot;Liberation Sans&quot;, &quot;Noto Sans CJK SC&quot;, sans-serif" font-weight="bold">年月日</text>
<text transform="translate(882 765) scale(0.8 1)" font-size="6.3" fill="#fff" text-anchor="middle" font-family="&quot;Liberation Sans&quot;, &quot;Noto Sans CJK SC&quot;, sans-serif" font-weight="bold">设计</text>
<text transform="translate(938.5 765) scale(0.8 1)" font-size="6.3" fill="#fff" text-anchor="middle" font-family="&quot;Liberation Sans&quot;, &quot;Noto Sans CJK SC&quot;, sans-serif" font-weight="bold">标准化</text>
<text transform="translate(882 784) scale(0.8 1)" font-size="6.3" fill="#fff" text-anchor="middle" font-family="&quot;Liberation Sans&quot;, &quot;Noto Sans CJK SC&quot;, sans-serif" font-weight="bold">审核</text>
<text transform="translate(882 794) scale(0.8 1)" font-size="6.3" fill="#fff" text-anchor="middle" font-family="&quot;Liberation Sans&quot;, &quot;Noto Sans CJK SC&quot;, sans-serif" font-weight="bold">工艺</text>
<text transform="translate(938.5 794) scale(0.8 1)" font-size="6.3" fill="#fff" text-anchor="middle" font-family="&quot;Liberation Sans&quot;, &quot;Noto Sans CJK SC&quot;, sans-serif" font-weight="bold">批准</text>
<line x1="1053.5" y1="718.5" x2="1053.5" y2="795.5" stroke="#fff" stroke-width="1"/>
<line x1="984.5" y1="759.5" x2="1053.5" y2="759.5" stroke="#fff" stroke-width="1"/>
<line x1="984.5" y1="771.5" x2="1053.5" y2="771.5" stroke="#fff" stroke-width="1"/>
<line x1="984.5" y1="783.5" x2="1053.5" y2="783.5" stroke="#fff" stroke-width="1"/>
<line x1="1020.5" y1="759.5" x2="1020.5" y2="783.5" stroke="#fff" stroke-width="1"/>
<line x1="1037.5" y1="759.5" x2="1037.5" y2="783.5" stroke="#fff" stroke-width="1"/>
<line x1="993.5" y1="771.5" x2="993.5" y2="783.5" stroke="#fff" stroke-width="1"/>
<line x1="1002.5" y1="771.5" x2="1002.5" y2="783.5" stroke="#fff" stroke-width="1"/>
<line x1="1011.5" y1="771.5" x2="1011.5" y2="783.5" stroke="#fff" stroke-width="1"/>
<text transform="translate(1019 740)" font-size="5.5" fill="#fff" text-anchor="middle" font-family="&quot;Liberation Sans&quot;, &quot;Noto Sans CJK SC&quot;, sans-serif" font-weight="bold">模具装配图</text>
<text transform="translate(1002.5 768.5) scale(0.8 1)" font-size="6.3" fill="#fff" text-anchor="middle" font-family="&quot;Liberation Sans&quot;, &quot;Noto Sans CJK SC&quot;, sans-serif" font-weight="bold">阶段标记</text>
<text transform="translate(1029 768.5) scale(0.8 1)" font-size="6.3" fill="#fff" text-anchor="middle" font-family="&quot;Liberation Sans&quot;, &quot;Noto Sans CJK SC&quot;, sans-serif" font-weight="bold">重量</text>
<text transform="translate(1045.5 768.5) scale(0.8 1)" font-size="6.3" fill="#fff" text-anchor="middle" font-family="&quot;Liberation Sans&quot;, &quot;Noto Sans CJK SC&quot;, sans-serif" font-weight="bold">比例</text>
<text transform="translate(1045.5 780) scale(0.8 1)" font-size="5" fill="#fff" text-anchor="middle" font-family="&quot;Liberation Sans&quot;, &quot;Noto Sans CJK SC&quot;, sans-serif">1:1</text>
<text transform="translate(993 793)" font-size="6" fill="#fff" text-anchor="middle" font-family="&quot;Liberation Sans&quot;, &quot;Noto Sans CJK SC&quot;, sans-serif" font-weight="bold">共</text>
<text transform="translate(1001 793)" font-size="6" fill="#fff" text-anchor="middle" font-family="&quot;Liberation Sans&quot;, &quot;Noto Sans CJK SC&quot;, sans-serif">1</text>
<text transform="translate(1016 793)" font-size="6" fill="#fff" text-anchor="middle" font-family="&quot;Liberation Sans&quot;, &quot;Noto Sans CJK SC&quot;, sans-serif" font-weight="bold">张</text>
<text transform="translate(1033 793)" font-size="6" fill="#fff" text-anchor="middle" font-family="&quot;Liberation Sans&quot;, &quot;Noto Sans CJK SC&quot;, sans-serif" font-weight="bold">第</text>
<text transform="translate(1041 793)" font-size="6" fill="#fff" text-anchor="middle" font-family="&quot;Liberation Sans&quot;, &quot;Noto Sans CJK SC&quot;, sans-serif">1</text>
<text transform="translate(1052 793)" font-size="6" fill="#fff" text-anchor="middle" font-family="&quot;Liberation Sans&quot;, &quot;Noto Sans CJK SC&quot;, sans-serif" font-weight="bold">张</text>
<line x1="1053.5" y1="743.5" x2="1122.5" y2="743.5" stroke="#fff" stroke-width="1"/>
<line x1="1053.5" y1="771.5" x2="1122.5" y2="771.5" stroke="#fff" stroke-width="1"/>
<text transform="translate(1088 733)" font-size="5.5" fill="#fff" text-anchor="middle" font-family="&quot;Liberation Sans&quot;, &quot;Noto Sans CJK SC&quot;, sans-serif" font-weight="bold">XXX大学</text>
<text transform="translate(1082 759)" font-size="5" fill="#fff" text-anchor="middle" font-family="&quot;Liberation Sans&quot;, &quot;Noto Sans CJK SC&quot;, sans-serif">XXXXXXXX</text>
</g>
<g id="toolbar" shape-rendering="geometricPrecision">
<rect x="578.5" y="778.5" width="288" height="30" fill="#5d5d5d" stroke="#7a7a7a" stroke-width="1"/>
<circle cx="592.5" cy="792.5" r="4" fill="none" stroke="#e8e8e8" stroke-width="1.6" shape-rendering="geometricPrecision"/>
<circle cx="592.5" cy="803" r="4" fill="none" stroke="#e8e8e8" stroke-width="1.6" shape-rendering="geometricPrecision"/>
<circle cx="602.5" cy="803" r="4" fill="none" stroke="#e8e8e8" stroke-width="1.6" shape-rendering="geometricPrecision"/>
<path d="M602.5,786.5 L607.5,792 L602.5,797.5 L597.5,792 Z" fill="none" stroke="#e8e8e8" stroke-width="1.6"/>
<line x1="614.5" y1="783" x2="614.5" y2="800" stroke="#808080" stroke-width="1"/>
<text transform="translate(619.5 800.5)" font-size="12.2" fill="#fff" text-anchor="start" font-family="&quot;Liberation Sans&quot;, &quot;Noto Sans CJK SC&quot;, sans-serif">标注分类</text>
<rect x="674.5" y="782.5" width="150" height="24" fill="#636363" stroke="#1a1a1a" stroke-width="1"/>
<rect x="680.5" y="788.5" width="13" height="14" fill="#e8500a" stroke="#222" stroke-width="1"/>
<text transform="translate(697 800.5)" font-size="12.2" fill="#fff" text-anchor="start" font-family="&quot;Liberation Sans&quot;, &quot;Noto Sans CJK SC&quot;, sans-serif">未分类</text>
<path d="M811,792 L821,792 L816,798 Z" fill="#fff" stroke="#fff" stroke-width="1"/>
<line x1="828.5" y1="783" x2="828.5" y2="800" stroke="#808080" stroke-width="1"/>
<path d="M841,800 L841,790 L846,790 M849,800 L857.5,789.5 L854.5,787 L846,797.5 L846,801 Z" fill="none" stroke="#e8e8e8" stroke-width="1.5"/>
</g>
</svg>
</body></html>
